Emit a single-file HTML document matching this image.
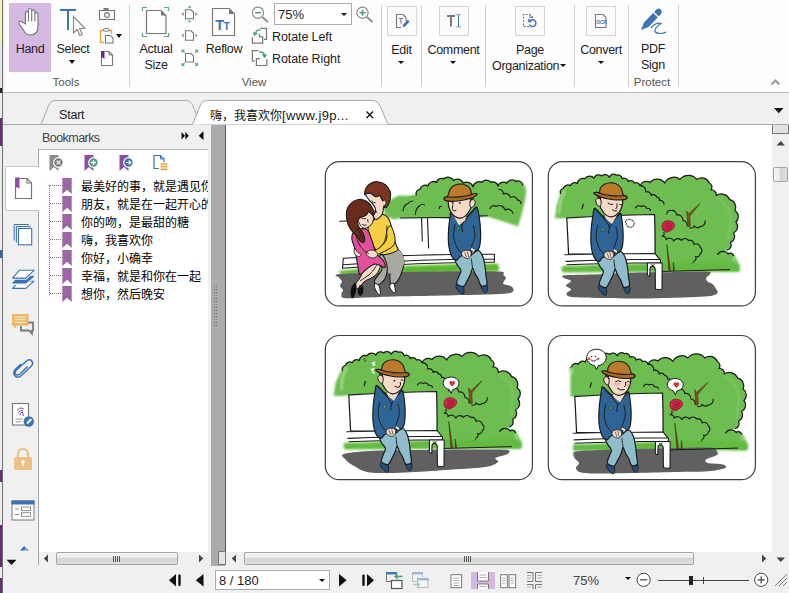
<!DOCTYPE html>
<html><head><meta charset="utf-8"><title>Foxit</title>
<style>
*{box-sizing:border-box;margin:0;padding:0}
html,body{width:789px;height:593px;overflow:hidden;background:#f0f0f0}
body{font-family:"Liberation Sans","Noto Sans CJK SC",sans-serif;font-size:12px;color:#222;position:relative}
.a{position:absolute}
.t{position:absolute;white-space:nowrap;line-height:14px;color:#1e1e1e}
.c{text-align:center}
.sep{position:absolute;width:1px;background:#d0d0d0;top:5px;height:82px}
.grp{position:absolute;top:75px;font-size:11.5px;color:#555;line-height:14px;text-align:center}
svg{position:absolute;overflow:visible}
.bm{position:absolute;left:81px;font-size:12px;line-height:16px;white-space:nowrap;color:#000;font-family:"Liberation Sans","Noto Sans CJK SC",sans-serif}
</style></head><body>

<!-- left window-edge strip -->
<div class="a" style="left:0;top:0;width:5px;height:593px;background:#f0f0f0"></div>
<div class="a" style="left:0;top:0;width:2px;height:593px;background:#ececf0"></div>
<div class="a" style="left:0;top:0;width:2px;height:44px;background:#f4efb4"></div>
<div class="a" style="left:0;top:44px;width:2px;height:44px;background:#dfe6ee"></div>
<div class="a" style="left:0;top:88px;width:2px;height:5px;background:#222"></div>
<div class="a" style="left:0;top:118px;width:2px;height:28px;background:#6b2a78"></div>
<div class="a" style="left:0;top:250px;width:2px;height:8px;background:#3565b5"></div>
<div class="a" style="left:0;top:470px;width:2px;height:12px;background:#6b2a78"></div>
<div class="a" style="left:0;top:525px;width:2px;height:42px;background:#6b2a78"></div><div class="a" style="left:0;top:578px;width:2px;height:15px;background:#6b2a78"></div>
<div class="a" style="left:2px;top:0;width:1px;height:593px;background:#6e6e6e"></div>
<!-- RIBBON -->
<div id="ribbon" class="a" style="left:5px;top:0;width:784px;height:92px;background:#fdfdfd"></div>
<div class="a" style="left:3px;top:92px;width:786px;height:1px;background:#b9b9b9"></div>


<!-- ribbon content -->
<div class="a" style="left:9px;top:3px;width:42px;height:69px;background:#d5b9e3"></div>
<svg style="left:17px;top:7px" width="26" height="30" viewBox="0 0 26 30">
<path d="M8.5 17 L8.5 6.2 Q8.5 4.4 10 4.4 Q11.5 4.4 11.5 6.2 L11.5 3.4 Q11.5 1.5 13.1 1.5 Q14.7 1.5 14.7 3.4 L14.7 4.6 Q14.7 2.9 16.3 2.9 Q17.9 2.9 17.9 4.8 L17.9 7 Q17.9 5.4 19.4 5.4 Q21 5.4 21 7.2 L21 19 Q21 28 13.5 28 Q9.5 28 7.3 24.5 L2.2 16.8 Q1.2 15.2 2.6 14.3 Q4 13.6 5.2 15 Z" fill="#fff" stroke="#7a7a7a" stroke-width="1.2" stroke-linejoin="round"/>
<path d="M11.5 6 V14.5 M14.7 4.6 V14.5 M17.9 7 V14.5" stroke="#7a7a7a" stroke-width="1.1" fill="none"/>
</svg>
<div class="t c" style="left:9px;top:42px;width:42px;font-size:12.5px;letter-spacing:-0.3px">Hand</div>

<svg style="left:58px;top:7px" width="30" height="30" viewBox="0 0 30 30">
<path d="M2 3 H18 M10 3 V23" stroke="#3b73b3" stroke-width="2" fill="none"/>
<path d="M15.5 9.5 L15.5 26 L19.3 22.6 L21.8 28.5 L24.2 27.4 L21.7 21.7 L26.8 21.3 Z" fill="#fff" stroke="#8a8a8a" stroke-width="1.2" stroke-linejoin="miter"/>
</svg>
<div class="t c" style="left:52px;top:42px;width:42px;font-size:12.5px;letter-spacing:-0.3px">Select</div>
<div class="a" style="left:69px;top:60px;border:3.5px solid transparent;border-top:4px solid #111;border-bottom:0"></div>

<!-- camera -->
<svg style="left:98px;top:7px" width="18" height="14" viewBox="0 0 18 14">
<rect x="1.5" y="3.5" width="15" height="9" fill="none" stroke="#777" stroke-width="1.1"/>
<rect x="5.5" y="1" width="5" height="2" fill="#777"/>
<circle cx="9" cy="8" r="2.4" fill="none" stroke="#777" stroke-width="1.1"/>
</svg>
<!-- clipboard -->
<svg style="left:99px;top:27px" width="18" height="18" viewBox="0 0 18 18">
<path d="M5 3.5 H1.5 V15.5 H5" fill="none" stroke="#e8a341" stroke-width="1.4"/>
<path d="M10 3.5 H12.5 V7" fill="none" stroke="#e8a341" stroke-width="1.4"/>
<rect x="4.5" y="1.5" width="5.5" height="2.6" rx="1.2" fill="#fdfdfd" stroke="#777" stroke-width="1"/>
<path d="M6.5 8.5 H11.5 L14 11 V16 H6.5 Z" fill="#fff" stroke="#777" stroke-width="1.1"/>
</svg>
<div class="a" style="left:116px;top:34px;border:3.5px solid transparent;border-top:4px solid #111;border-bottom:0"></div>
<!-- bookmark page -->
<svg style="left:100px;top:50px" width="16" height="18" viewBox="0 0 16 18">
<path d="M5 1.5 H9 L12.5 5 V15.5 H1.5 V9" fill="#fff" stroke="#777" stroke-width="1.1"/>
<path d="M9 1.5 V5 H12.5" fill="none" stroke="#777" stroke-width="1"/>
<path d="M1 1 H4.5 V9 L2.75 7.6 L1 9 Z" fill="#5e2d84"/>
</svg>
<div class="grp" style="left:40px;width:52px">Tools</div>
<div class="sep" style="left:129px"></div>

<!-- Actual size -->
<svg style="left:141px;top:6px" width="30" height="32" viewBox="0 0 30 32">
<path d="M1.5 5 V1.5 H6 M23 1.5 H27.5 V5 M27.5 27 V30.5 H23 M6 30.5 H1.5 V27" fill="none" stroke="#5aa58c" stroke-width="1.2"/>
<path d="M5.5 4.5 H20 L25 9.5 V27.5 H5.5 Z" fill="#fff" stroke="#777" stroke-width="1.2"/>
<path d="M20 4.5 L25 9.5 H20 Z" fill="#777"/>
</svg>
<div class="t c" style="left:132px;top:42px;width:48px;font-size:12.5px;letter-spacing:-0.3px">Actual</div>
<div class="t c" style="left:132px;top:58px;width:48px;font-size:12.5px;letter-spacing:-0.3px">Size</div>


<!-- fit icons -->
<svg style="left:180px;top:4px" width="20" height="20" viewBox="0 0 20 20">
<path d="M5.5 5.8 H11 L13.5 8.3 V14.8 H5.5 Z" fill="#fff" stroke="#777" stroke-width="1.1"/>
<path d="M9.5 1.6 L11.5 3.8 H7.5 Z M9.5 18.6 L11.5 16.4 H7.5 Z M1.6 10 L3.8 8 V12 Z M17.6 10 L15.4 8 V12 Z" fill="#5aa58c"/>
</svg>
<svg style="left:180px;top:26px" width="20" height="18" viewBox="0 0 20 18">
<path d="M5.5 4.8 H11 L13.5 7.3 V14.3 H5.5 Z" fill="#fff" stroke="#777" stroke-width="1.1"/>
<path d="M1.6 9.5 L3.8 7.5 V11.5 Z M17.6 9.5 L15.4 7.5 V11.5 Z" fill="#5aa58c"/>
</svg>
<svg style="left:180px;top:48px" width="20" height="20" viewBox="0 0 20 20">
<path d="M5.5 5.5 H11 L13.5 8 V14 H5.5 Z" fill="#fff" stroke="#777" stroke-width="1.1"/>
<path d="M2 2 L4.6 4.6 M2 2 H4.6 M2 2 V4.6 M17.5 2 L15 4.6 M17.5 2 H15 M17.5 2 V4.6 M2 17.5 L4.6 15 M2 17.5 H4.6 M2 17.5 V15 M17.5 17.5 L15 15 M17.5 17.5 H15 M17.5 17.5 V15" stroke="#5aa58c" stroke-width="1.1" fill="none"/>
</svg>
<!-- reflow -->
<svg style="left:211px;top:7px" width="26" height="30" viewBox="0 0 26 30">
<path d="M1.5 1.5 H18 L23.5 7 V28.5 H1.5 Z" fill="#fff" stroke="#777" stroke-width="1.2"/>
<path d="M18 1.5 L23.5 7 H18 Z" fill="#777"/>
<text x="4.2" y="23" font-family="Liberation Sans,sans-serif" font-weight="bold" font-size="14.5" fill="#3b73b3">T</text>
<text x="12.6" y="23" font-family="Liberation Sans,sans-serif" font-weight="bold" font-size="10.5" fill="#3b73b3">T</text>
</svg>
<div class="t c" style="left:200px;top:42px;width:48px;font-size:12.5px;letter-spacing:-0.3px">Reflow</div>
<!-- zoom out -->
<svg style="left:250px;top:5px" width="20" height="20" viewBox="0 0 20 20">
<circle cx="8" cy="7.7" r="5.6" fill="#fff" stroke="#8a8a8a" stroke-width="1.2"/>
<path d="M12.3 12 L18 17" stroke="#8a8a8a" stroke-width="1.8"/>
<path d="M5 7.7 H11" stroke="#4fa07f" stroke-width="1.6"/>
</svg>
<!-- zoom combobox -->
<div class="a" style="left:274px;top:3px;width:78px;height:22px;background:#fff;border:1px solid #ababab"></div>
<div class="t" style="left:278px;top:8px;font-size:13px">75%</div>
<div class="a" style="left:341px;top:13px;border:3px solid transparent;border-top:3.5px solid #111;border-bottom:0"></div>
<!-- zoom in -->
<svg style="left:355px;top:5px" width="20" height="20" viewBox="0 0 20 20">
<circle cx="7.5" cy="7.7" r="5.6" fill="#fff" stroke="#8a8a8a" stroke-width="1.2"/>
<path d="M11.8 12 L17.5 17" stroke="#8a8a8a" stroke-width="1.8"/>
<path d="M4.5 7.7 H10.5 M7.5 4.7 V10.7" stroke="#4fa07f" stroke-width="1.6"/>
</svg>
<!-- rotate left -->
<svg style="left:251px;top:27px" width="18" height="18" viewBox="0 0 18 18">
<path d="M9.200 1.300 H15.500 V12.300 H13" fill="none" stroke="#777" stroke-width="1.200"/>
<path d="M1.400 10.200 V16.100 H11.700 V9.800 H8.300 V6.800" fill="none" stroke="#777" stroke-width="1.200"/>
<path d="M9.600 3.600 Q6.200 1.300 4.600 6" fill="none" stroke="#4fa07f" stroke-width="1.400"/>
<path d="M1.800 5 L6.800 6.300 L3.300 9.200 Z" fill="#4fa07f"/>
</svg>
<div class="t" style="left:272px;top:30px;font-size:12.5px;letter-spacing:-0.1px">Rotate Left</div>
<!-- rotate right -->
<svg style="left:251px;top:49px" width="18" height="18" viewBox="0 0 18 18">
<path d="M7.500 1.700 H1.400 V12.200 H3.700" fill="none" stroke="#777" stroke-width="1.200"/>
<path d="M8.800 9.700 H5.400 V16.500 H15.800 V10.100" fill="none" stroke="#777" stroke-width="1.200"/>
<path d="M8.300 3.200 Q13 2.200 13.600 7" fill="none" stroke="#4fa07f" stroke-width="1.400"/>
<path d="M10.700 5.200 L16.200 5.500 L13.700 9.300 Z" fill="#4fa07f"/>
</svg>
<div class="t" style="left:272px;top:52px;font-size:12.5px;letter-spacing:-0.1px">Rotate Right</div>
<div class="grp" style="left:228px;width:52px">View</div>
<div class="sep" style="left:381px"></div>


<!-- Edit -->
<div class="a" style="left:387px;top:6px;width:30px;height:30px;background:#fbfbfb;border:1px solid #d6d6d6"></div>
<svg style="left:393px;top:12px" width="18" height="18" viewBox="0 0 18 18">
<path d="M3.5 2.5 H10 L13 5.5 V9 M8 15.5 H3.5 V2.5" fill="none" stroke="#777" stroke-width="1.1"/>
<path d="M5.8 6.5 H10.2 M8 6.5 V11.5" stroke="#777" stroke-width="1.1"/>
<path d="M9.5 15.2 L10.4 12.2 L14.6 7.8 L16.6 9.6 L12.4 14.2 Z" fill="#3b73b3"/>
</svg>
<div class="t c" style="left:381px;top:43px;width:41px;font-size:12.5px;letter-spacing:-0.3px">Edit</div>
<div class="a" style="left:398px;top:61px;border:3px solid transparent;border-top:3.5px solid #111;border-bottom:0"></div>
<div class="sep" style="left:421px"></div>
<!-- Comment -->
<div class="a" style="left:439px;top:6px;width:30px;height:30px;background:#fbfbfb;border:1px solid #d6d6d6"></div>
<svg style="left:445px;top:12px" width="18" height="18" viewBox="0 0 18 18">
<path d="M2 4 H10 M6 4 V14.5" stroke="#777" stroke-width="1.9" fill="none"/>
<path d="M11.5 2.5 Q13 2.5 13.5 3.3 Q14 2.5 15.5 2.5 M13.5 3.3 V14.2 M11.5 15 Q13 15 13.5 14.2 Q14 15 15.5 15" stroke="#3b73b3" stroke-width="1" fill="none"/>
</svg>
<div class="t c" style="left:423px;top:43px;width:61px;font-size:12.5px;letter-spacing:-0.3px">Comment</div>
<div class="a" style="left:450px;top:61px;border:3px solid transparent;border-top:3.5px solid #111;border-bottom:0"></div>
<div class="sep" style="left:485px"></div>
<!-- Page Org -->
<div class="a" style="left:515px;top:6px;width:30px;height:30px;background:#fbfbfb;border:1px solid #d6d6d6"></div>
<svg style="left:521px;top:12px" width="18" height="18" viewBox="0 0 18 18">
<path d="M8 14.5 H2.5 V2.5 H9 L12 5.5" fill="none" stroke="#777" stroke-width="1.1" stroke-dasharray="2 1.3"/>
<path d="M9 2.5 V5.5 H12" fill="none" stroke="#777" stroke-width="1"/>
<path d="M9.2 8.6 A3.4 3.4 0 1 1 8.4 12.6" fill="none" stroke="#3b73b3" stroke-width="1.5"/>
<path d="M7.2 6.3 V10.2 H11 Z" fill="#3b73b3"/>
</svg>
<div class="t c" style="left:487px;top:43px;width:86px;font-size:12.5px;letter-spacing:-0.3px">Page</div>
<div class="t" style="left:492px;top:59px;font-size:12.5px;letter-spacing:-0.3px">Organization</div>
<div class="a" style="left:560px;top:64px;border:3px solid transparent;border-top:3.5px solid #111;border-bottom:0"></div>
<div class="sep" style="left:574px"></div>
<!-- Convert -->
<div class="a" style="left:586px;top:6px;width:30px;height:30px;background:#fbfbfb;border:1px solid #d6d6d6"></div>
<svg style="left:592px;top:12px" width="18" height="18" viewBox="0 0 18 18">
<path d="M3.5 2.5 H11 L14 5.5 V15.5 H3.5 Z" fill="#fff" stroke="#777" stroke-width="1.1"/>
<text x="4.3" y="11.5" font-family="Liberation Sans,sans-serif" font-weight="bold" font-size="5" fill="#3b73b3" letter-spacing="-0.3">OCR</text>
</svg>
<div class="t c" style="left:575px;top:43px;width:52px;font-size:12.5px;letter-spacing:-0.3px">Convert</div>
<div class="a" style="left:598px;top:61px;border:3px solid transparent;border-top:3.5px solid #111;border-bottom:0"></div>
<div class="sep" style="left:628px"></div>
<!-- PDF Sign -->
<svg style="left:638px;top:6px" width="30" height="30" viewBox="0 0 30 30">
<path d="M3 24 L6 16.5 L18.5 3.5 Q20.8 1.6 23 3.8 Q24.8 6 23 8 L10.5 21 Z" fill="#3b73b3"/>
<path d="M15.5 6.3 L20.3 11" stroke="#fdfdfd" stroke-width="1.3"/>
<path d="M13 22 Q18 16 23 17.5 Q20 19 17.5 22.5 Q15 27 22 27.5 Q26 27.5 28 26" fill="none" stroke="#3b73b3" stroke-width="1.2"/>
</svg>
<div class="t c" style="left:629px;top:42px;width:48px;font-size:12.5px;letter-spacing:-0.3px">PDF</div>
<div class="t c" style="left:629px;top:58px;width:48px;font-size:12.5px;letter-spacing:-0.3px">Sign</div>
<div class="grp" style="left:626px;width:52px">Protect</div>
<div class="sep" style="left:678px"></div>
<svg style="left:770px;top:78px" width="12" height="8" viewBox="0 0 12 8"><path d="M1.500 6.500 L5.500 2.500 L9.500 6.500" fill="none" stroke="#9a9a9a" stroke-width="2"/></svg>

<!-- tabbar -->
<div class="a" style="left:3px;top:93px;width:786px;height:32px;background:#f0f0f0"></div>
<div class="a" style="left:3px;top:124px;width:786px;height:1px;background:#a8a8a8"></div>


<!-- tabs -->
<svg style="left:0;top:93px" width="789" height="33" viewBox="0 0 789 33">
<path d="M41 31.5 L48.5 13 Q50.5 8 55 7.5 H186 Q191 8 193 13 L200 31.5" fill="#f0f0f0" stroke="#a9a9a9" stroke-width="1"/>
<path d="M192.5 31.5 L200 13 Q202 8 206.5 7.5 H373 Q378 8 380 13 L388 31.5 Z" fill="#fff" stroke="none"/>
<path d="M5 31.5 H192.5 L200 13 Q202 8 206.5 7.5 H373 Q378 8 380 13 L388 31.5 H789" fill="none" stroke="#a9a9a9" stroke-width="1"/>
<path d="M774 15 H783.500 L778.750 20.300 Z" fill="#111"/>
<path d="M366.500 18.500 L373 25 M373 18.500 L366.500 25" stroke="#111" stroke-width="1.4"/>
</svg>
<div class="t" style="left:59px;top:108px;font-size:12.5px;letter-spacing:-0.2px">Start</div>
<div class="t" style="left:210px;top:108px;font-size:12px;line-height:16px;color:#111">嗨，我喜欢你<span style="color:#1a1a1a;font-size:13px;letter-spacing:0.35px">[www.j9p...</span></div>

<!-- nav panel -->
<div id="nav" class="a" style="left:3px;top:125px;width:208px;height:442px;background:#f0f0f0"></div>
<div class="a" style="left:38px;top:149px;width:170px;height:403px;background:#fff;border-top:1px solid #b4b4b4;border-left:1px solid #a6a6a6"></div>

<!-- nav content -->
<div class="t" style="left:42px;top:131px;font-size:12.5px;letter-spacing:-0.55px;color:#444">Bookmarks</div>
<svg style="left:181px;top:131px" width="24" height="10" viewBox="0 0 24 10">
<path d="M0.500 1 L4 4.800 L0.500 8.600 Z M4.300 1 L7.800 4.800 L4.300 8.600 Z" fill="#111"/>
<path d="M22.500 0.300 V9.300 L17.700 4.800 Z" fill="#111"/>
</svg>
<!-- selected side tab -->
<div class="a" style="left:5px;top:166px;width:34px;height:45px;background:#fff;border:1px solid #c8c8c8;border-right:0"></div>
<div class="a" style="left:38px;top:211px;width:1px;height:354px;background:#a6a6a6"></div>
<!-- side icons -->
<svg style="left:13px;top:176px" width="22" height="24" viewBox="0 0 22 24">
<path d="M6 2.500 H14 L18.500 7 V22.500 H2.500 V12" fill="#fff" stroke="#777" stroke-width="1.200"/>
<path d="M14 2.500 V7 H18.500" fill="none" stroke="#777" stroke-width="1.100"/>
<path d="M2 1.500 H6.500 V13 L4.250 11 L2 13 Z" fill="#8a4ea2"/>
</svg>
<svg style="left:13px;top:223px" width="22" height="24" viewBox="0 0 22 24">
<path d="M1.200 17.500 V1.500 H16.200 M3.400 19.500 V3.500 H17.500" fill="none" stroke="#3b73b3" stroke-width="1"/>
<rect x="5.500" y="5.500" width="13.200" height="16.300" fill="#fff" stroke="#3b73b3" stroke-width="1.100"/>
</svg>
<svg style="left:11px;top:268px" width="25" height="22" viewBox="0 0 25 22">
<path d="M8.300 13.200 H23 L14.800 20.400 H1.600 Z" fill="#fff" stroke="#3b73b3" stroke-width="1.100" stroke-linejoin="round"/>
<path d="M8.300 8 H23 L14.800 15.300 H1.600 Z" fill="#f0f0f0" stroke="#f0f0f0" stroke-width="3.200" stroke-linejoin="round"/><path d="M8.300 8.300 H23 L15 15 H1.600 Z" fill="#3b73b3" stroke="#3b73b3" stroke-width="1" stroke-linejoin="round"/>
<path d="M8.300 2.300 H23 L14.800 10.100 H1.600 Z" fill="#f0f0f0" stroke="#f0f0f0" stroke-width="3.200" stroke-linejoin="round"/><path d="M8.300 2.300 H23 L14.800 10.100 H1.600 Z" fill="#fff" stroke="#3b73b3" stroke-width="1.100" stroke-linejoin="round"/>
</svg>
<!-- bookmark toolbar -->
<svg style="left:48px;top:154px" width="18" height="18" viewBox="0 0 18 18">
<path d="M1.500 1 H10.500 V17 L6 13 L1.500 17 Z" fill="#8c8c8c"/>
<circle cx="10.500" cy="8.500" r="4.800" fill="#7d7d7d" stroke="#fff" stroke-width="1.200"/>
<path d="M8.700 6.700 L12.300 10.300 M12.300 6.700 L8.700 10.300" stroke="#fff" stroke-width="1.200"/>
</svg>
<svg style="left:83px;top:154px" width="18" height="18" viewBox="0 0 18 18">
<path d="M1.500 1 H10.500 V17 L6 13 L1.500 17 Z" fill="#8a4ea2"/>
<circle cx="10.500" cy="8.500" r="4.800" fill="#4fa07f" stroke="#fff" stroke-width="1.200"/>
<path d="M8 8.500 H13 M10.500 6 V11" stroke="#fff" stroke-width="1.300"/>
</svg>
<svg style="left:118px;top:154px" width="18" height="18" viewBox="0 0 18 18">
<path d="M1.500 1 H10.500 V17 L6 13 L1.500 17 Z" fill="#8a4ea2"/>
<circle cx="10.500" cy="8.500" r="4.800" fill="#3b73b3" stroke="#fff" stroke-width="1.200"/>
<path d="M8 8.500 H12.600 M10.800 6.500 L12.800 8.500 L10.800 10.500" stroke="#fff" stroke-width="1.200" fill="none"/>
</svg>
<svg style="left:152px;top:154px" width="18" height="18" viewBox="0 0 18 18">
<path d="M7 14.500 H2 V1.500 H8.500 L12 5 V8" fill="#fff" stroke="#3b73b3" stroke-width="1.200"/>
<path d="M8.500 1.500 V5 H12" fill="none" stroke="#3b73b3" stroke-width="1"/>
<path d="M8.500 10 H15.500 M8.500 12.700 H15.500 M8.500 15.400 H15.500" stroke="#e8a341" stroke-width="1.700"/>
</svg>
<!-- tree -->
<div class="a" style="left:49px;top:185px;width:0;height:110px;border-left:1px dotted #777"></div>
<div class="a" style="left:39px;top:176px;width:169px;height:130px;overflow:hidden"><div style="position:absolute;left:-39px;top:-176px;width:400px;height:400px">
<svg style="left:62px;top:178px" width="10" height="16" viewBox="0 0 10 16"><path d="M0.300 0 H9.700 V16 L5 11.800 L0.300 16 Z" fill="#9a66a4"/></svg>
<div class="bm" style="top:178.5px">最美好的事，就是遇见你</div>
<div class="a" style="left:50px;top:185px;width:11px;height:0;border-top:1px dotted #777"></div>
<svg style="left:62px;top:196px" width="10" height="16" viewBox="0 0 10 16"><path d="M0.300 0 H9.700 V16 L5 11.800 L0.300 16 Z" fill="#9a66a4"/></svg>
<div class="bm" style="top:196.5px">朋友，就是在一起开心的</div>
<div class="a" style="left:50px;top:203px;width:11px;height:0;border-top:1px dotted #777"></div>
<svg style="left:62px;top:214px" width="10" height="16" viewBox="0 0 10 16"><path d="M0.300 0 H9.700 V16 L5 11.800 L0.300 16 Z" fill="#9a66a4"/></svg>
<div class="bm" style="top:214.5px">你的吻，是最甜的糖</div>
<div class="a" style="left:50px;top:221px;width:11px;height:0;border-top:1px dotted #777"></div>
<svg style="left:62px;top:232px" width="10" height="16" viewBox="0 0 10 16"><path d="M0.300 0 H9.700 V16 L5 11.800 L0.300 16 Z" fill="#9a66a4"/></svg>
<div class="bm" style="top:232.5px">嗨，我喜欢你</div>
<div class="a" style="left:50px;top:239px;width:11px;height:0;border-top:1px dotted #777"></div>
<svg style="left:62px;top:250px" width="10" height="16" viewBox="0 0 10 16"><path d="M0.300 0 H9.700 V16 L5 11.800 L0.300 16 Z" fill="#9a66a4"/></svg>
<div class="bm" style="top:250.5px">你好，小确幸</div>
<div class="a" style="left:50px;top:257px;width:11px;height:0;border-top:1px dotted #777"></div>
<svg style="left:62px;top:268px" width="10" height="16" viewBox="0 0 10 16"><path d="M0.300 0 H9.700 V16 L5 11.800 L0.300 16 Z" fill="#9a66a4"/></svg>
<div class="bm" style="top:268.5px">幸福，就是和你在一起</div>
<div class="a" style="left:50px;top:275px;width:11px;height:0;border-top:1px dotted #777"></div>
<svg style="left:62px;top:286px" width="10" height="16" viewBox="0 0 10 16"><path d="M0.300 0 H9.700 V16 L5 11.800 L0.300 16 Z" fill="#9a66a4"/></svg>
<div class="bm" style="top:286.5px">想你，然后晚安</div>
<div class="a" style="left:50px;top:293px;width:11px;height:0;border-top:1px dotted #777"></div>
</div></div>


<!-- lower side icons -->
<svg style="left:11px;top:313px" width="24" height="22" viewBox="0 0 24 22">
<path d="M10 13 V17.500 H18 L21 20.500 V17.500 H22 V9.500 H17" fill="none" stroke="#7a7a7a" stroke-width="1.800"/>
<path d="M1 1 H17.500 V12.500 H6 L2.800 16 V12.500 H1 Z" fill="#f0b463"/>
<path d="M3.500 4 H15 M3.500 6.700 H15 M3.500 9.400 H15" stroke="#fff" stroke-width="0.900"/>
</svg>
<svg style="left:12px;top:357px" width="24" height="24" viewBox="0 0 24 24">
<path d="M15.500 9.500 L8 17 Q5.500 19 3.800 17.200 Q2.300 15.300 4.200 13.300 L14.500 4 Q17.500 1.600 19.800 3.900 Q21.800 6.300 19.300 9 L9.500 18.500 Q5.500 22 2.700 18.500 Q0.600 15.300 3.500 12.300 L9 7" fill="none" stroke="#3b73b3" stroke-width="1.500"/>
</svg>
<svg style="left:11px;top:402px" width="24" height="26" viewBox="0 0 24 26">
<rect x="1.500" y="1.500" width="16" height="21.500" fill="#fff" stroke="#777" stroke-width="1.100"/>
<path d="M4.500 17 H12 M4.500 19.800 H10" stroke="#888" stroke-width="0.900"/>
<path d="M6 8.500 Q8.500 4.500 12.500 6.500 M7 11 Q9 7 12 9 M9 13.500 Q8.500 10.500 11 10.300 Q12.500 10.500 12 12 Q11 13.500 13 13.500" fill="none" stroke="#8a4ea2" stroke-width="1"/>
<circle cx="17.800" cy="19.500" r="5.200" fill="#3b73b3"/>
<path d="M15.500 22 L16 20 L19.500 16.500 L21 18 L17.500 21.500 Z" fill="#fff"/>
</svg>
<svg style="left:13px;top:447px" width="20" height="24" viewBox="0 0 20 24">
<path d="M5 11 V7 Q5 2 10 2 Q15 2 15 7 V11" fill="none" stroke="#ecc183" stroke-width="2.200"/>
<rect x="1" y="10" width="18" height="13" rx="1.500" fill="#ecc183"/>
<circle cx="10" cy="15" r="1.700" fill="#fff"/><rect x="9.200" y="15" width="1.600" height="4" fill="#fff"/>
</svg>
<svg style="left:11px;top:500px" width="24" height="21" viewBox="0 0 24 21">
<rect x="1" y="1" width="22" height="19" fill="#fff" stroke="#777" stroke-width="1"/>
<rect x="0.500" y="0.500" width="23" height="4" fill="#3b73b3"/>
<path d="M4 9 H8 M4 14.500 H8" stroke="#888" stroke-width="1"/>
<rect x="10.500" y="7" width="9" height="3.600" fill="#fff" stroke="#888" stroke-width="0.900"/>
<rect x="10.500" y="12.700" width="9" height="3.600" fill="#fff" stroke="#888" stroke-width="0.900"/>
</svg>
<svg style="left:19px;top:545px" width="12" height="6" viewBox="0 0 12 6"><path d="M1 5.500 L5 1 L7.500 3.200 L5.500 5.500 Z M8 3.700 L10 5.500 H6.500 Z" fill="#3b73b3"/></svg>
<svg style="left:6px;top:559px" width="12" height="7" viewBox="0 0 12 7"><path d="M0.500 0.800 H10.500 L5.500 6 Z" fill="#111"/></svg>

<!-- nav h scrollbar -->
<div class="a" style="left:39px;top:552px;width:169px;height:14px;background:#f0f0f0"></div>
<div class="a" style="left:56px;top:552px;width:122px;height:13px;border:1px solid #a5a5a5;border-radius:2px;background:linear-gradient(#f6f6f6,#e9e9e9 45%,#d4d4d4 50%,#dfdfdf)"></div>
<div class="a" style="left:113px;top:556px;width:1px;height:6px;background:#555;box-shadow:2px 0 0 #555,4px 0 0 #555,6px 0 0 #555"></div>
<svg style="left:43px;top:554px" width="6" height="9" viewBox="0 0 6 9"><path d="M5 0.500 V8.500 L0.800 4.500 Z" fill="#444"/></svg>
<svg style="left:198px;top:554px" width="6" height="9" viewBox="0 0 6 9"><path d="M1 0.500 V8.500 L5.200 4.500 Z" fill="#444"/></svg>

<!-- splitter -->
<div class="a" style="left:211px;top:125px;width:14px;height:441px;background:#ababab"></div>
<div class="a" style="left:225px;top:125px;width:1px;height:426px;background:#555"></div>
<div class="a" style="left:214px;top:286px;width:1px;height:42px;background:repeating-linear-gradient(to bottom,#6a6a6a 0 1px,transparent 1px 3px)"></div><div class="a" style="left:216px;top:286px;width:1px;height:42px;background:repeating-linear-gradient(to bottom,#6a6a6a 0 1px,transparent 1px 3px)"></div>
<!-- doc area -->
<div id="doc" class="a" style="left:226px;top:125px;width:546px;height:427px;background:#fff"></div>
<!--COMIC--><svg style="left:226px;top:126px" width="545" height="424" viewBox="226 126 545 424"><defs><filter id="fz" x="-10%" y="-10%" width="120%" height="120%"><feGaussianBlur stdDeviation="1.300"/></filter><filter id="fz1" x="-5%" y="-30%" width="110%" height="160%"><feGaussianBlur stdDeviation="0.800"/></filter></defs><clipPath id="c1"><rect x="325.8" y="162.2" width="206.100" height="143.200" rx="13.500" ry="13.500"/></clipPath><g clip-path="url(#c1)"><path d="M383.5,210 L388,201 L398.5,195.5 L410,196 L416.3,194.8 L420,188 L428,184.5 L437,181 L444,177.5 L453.6,179 L463.3,182 L473,185.5 L482,181 L491,181 L498,184.5 L507,182 L515.7,180 L523,183.5 L526.5,189.5 L524.5,203 L521.5,215 L518,226.5 L505,222 L487.3,216.5 L449,217.5 L400,218 L394,219.5 L386,216 Z" fill="#6dbd50" filter="url(#fz)"/><path d="M416.3 194.8 A3.9 3.9 0 0 1 419.8 189.5 A5.4 5.4 0 0 1 427.8 186 A6 6 0 0 1 436.7 182.4 A4.9 4.9 0 0 1 443.8 178.9 A6.2 6.2 0 0 1 453.6 180.6 A6.2 6.2 0 0 1 463.3 183.3 A6.5 6.5 0 0 1 473.1 186.9 A6.1 6.1 0 0 1 481.9 182.4 A5.5 5.5 0 0 1 490.8 182.4 A4.9 4.9 0 0 1 497.9 186 A5.8 5.8 0 0 1 506.8 183.3 A5.6 5.6 0 0 1 515.7 181.5 A4.9 4.9 0 0 1 522.8 185.1 L523.500 200 L520 213 L516.500 223.500 L487.300 215.500 L449 216.800 L400 217 L392 214 L390 205 L400 198.500 Z" fill="#6dbd50"/><path d="M416.3 194.8 A3.9 3.9 0 0 1 419.8 189.5 A5.4 5.4 0 0 1 427.8 186 A6 6 0 0 1 436.7 182.4 A4.9 4.9 0 0 1 443.8 178.9 A6.2 6.2 0 0 1 453.6 180.6 A6.2 6.2 0 0 1 463.3 183.3 A6.5 6.5 0 0 1 473.1 186.9 A6.1 6.1 0 0 1 481.9 182.4 A5.5 5.5 0 0 1 490.8 182.4 A4.9 4.9 0 0 1 497.9 186 A5.8 5.8 0 0 1 506.8 183.3 A5.6 5.6 0 0 1 515.7 181.5 A4.9 4.9 0 0 1 522.8 185.1" fill="none" stroke="#1a1a1a" stroke-width="1.25" stroke-linejoin="round" stroke-linecap="round" /><path d="M498.8 189.5 A3.9 3.9 0 0 1 503.2 194 A4.9 4.9 0 0 1 510.3 197.5 A4.7 4.7 0 0 1 517.4 200.2 A3.1 3.1 0 0 1 521 203.7" fill="none" stroke="#1a1a1a" stroke-width="1.1" stroke-linejoin="round" stroke-linecap="round" /><path d="M489.9 208.5 A4.1 4.1 0 0 1 496.1 206.4 A5.9 5.9 0 0 1 505 209.9 A5.4 5.4 0 0 1 513 213.5" fill="none" stroke="#1a1a1a" stroke-width="1.1" stroke-linejoin="round" stroke-linecap="round" /><path d="M403 210.800 Q403.500 205 408 203.500 Q409.500 201 412.700 201 M415.400 214.400 Q415.800 208 419.500 206 Q421.500 203.300 424.300 204.800 M439.300 208.500 Q439.300 206 441.500 206.500" fill="none" stroke="#1a1a1a" stroke-width="1.1" stroke-linejoin="round" stroke-linecap="round" /><path d="M339.700 221.300 L347 221 M400.300 218 Q425 217.300 449.500 217.600 M474.800 216.100 L487.300 215.800 M421.600 217.800 L422.300 241 M427.500 217.800 L428.600 248" fill="none" stroke="#1a1a1a" stroke-width="1.100" stroke-linejoin="round" stroke-linecap="round" /><path d="M343.300 258.300 Q420 254 494.400 254.200 L494.400 262.200 Q420 262 342.500 268.300 Z" fill="#fff" stroke="#1a1a1a" stroke-width="1.100" stroke-linejoin="round" stroke-linecap="round" /><path d="M343 264.800 Q420 258.600 494.400 259.200" fill="none" stroke="#1a1a1a" stroke-width="1" stroke-linejoin="round" stroke-linecap="round" /><path d="M339.500 270.700 Q420 263.500 498 263.800 Q500 267.500 498.800 271.300 L340 274.300 Z" fill="#5cb82f" filter="url(#fz1)"/><path d="M340.3 274 C350.4 273 380.1 272.4 400 272 C419.9 271.6 443.4 271.4 460 271.3 C476.6 271.2 492.4 270.9 499.7 271.5 C506.9 272.1 502.5 273.9 503.5 275 C504.5 276.1 505.9 276.6 505.9 278 C505.8 279.4 502.7 282.2 503.2 283.5 C503.7 284.8 507.4 284.8 509 285.5 C510.6 286.2 512.5 286.9 513 288 C513.5 289.1 514.2 291.3 512 292.3 C509.8 293.3 507.7 293.6 500 294 C492.3 294.4 479.3 294.7 466 295 C452.7 295.3 431.8 295.8 420 296 C408.2 296.2 404.2 296.1 395 296.4 C385.8 296.6 373.5 297.2 365 297.5 C356.5 297.8 347.9 298.6 344 298 C340.1 297.4 341.7 295.3 341.5 294 C341.3 292.7 343.2 291.3 343 290 C342.8 288.7 340.2 287.4 340 286 C339.8 284.6 342.1 282.8 342 281.5 C341.9 280.2 339.8 279.2 339.5 278 C339.2 276.8 330.2 275 340.3 274 Z" fill="#606060"/><path d="M397.5 249.5 C400.3 250.2 402.8 256.1 403.7 259.5 C404.5 262.9 403.7 266.3 402.5 270.1 C401.3 273.9 398.6 280 396.6 282.2 C394.6 284.4 391.5 285.1 390.5 283.3 C389.4 281.5 389.9 275 390.2 271.3 C390.6 267.6 393.1 263.6 392.6 260.9 C392 258.3 386.1 257.3 386.9 255.4 C387.7 253.5 394.7 248.8 397.5 249.5 Z" fill="#a9a9a2" stroke="#1a1a1a" stroke-width="1.1" stroke-linejoin="round" stroke-linecap="round" /><path d="M378.7 255.3 C379.5 253.8 383.2 254.3 386.3 253.2 C389.5 252.2 394.6 248.2 397.5 249.1 C400.4 249.9 402.8 255.3 403.8 258.1 C404.7 260.9 404.5 263.8 403.1 265.8 C401.7 267.8 397.3 268.8 395.4 270 C393.5 271.1 392.8 272.2 391.6 272.8 C390.5 273.3 389.3 273.6 388.4 273.2 C387.5 272.7 387.5 271.8 386.3 270 C385.2 268.2 382.7 264.7 381.5 262.3 C380.2 259.9 377.9 256.8 378.7 255.3 Z" fill="#a9a9a2"/><path d="M382.2 254.2 C383.6 255.2 386.3 261.6 386.9 265.4 C387.5 269.2 387.1 274 385.7 277.2 C384.4 280.4 380.8 283.9 378.9 284.5 C377 285.1 373.8 283.5 374.3 281 C374.8 278.4 381.2 272.8 382 269.2 C382.7 265.6 378.6 262 378.7 259.5 C378.7 257 380.8 253.2 382.2 254.2 Z" fill="#a9a9a2" stroke="#1a1a1a" stroke-width="1.1" stroke-linejoin="round" stroke-linecap="round" /><path d="M374.5 283.7 C373.9 284.3 374.4 287.2 375.1 289 C375.8 290.8 378 294.1 378.9 294.7 C379.8 295.3 380.3 294.1 380.3 292.5 C380.3 291 379.9 286.9 378.9 285.5 C377.9 284 375.2 283.1 374.5 283.7 Z" fill="#fff" stroke="#1a1a1a" stroke-width="1" stroke-linejoin="round" stroke-linecap="round" /><path d="M389.9 284.5 C389.3 285.4 389.8 287.6 390.5 289 C391.1 290.4 393.2 292.5 394 292.8 C394.8 293.1 395.5 292.3 395.4 290.8 C395.4 289.3 394.7 284.7 393.8 283.7 C392.8 282.6 390.4 283.6 389.9 284.5 Z" fill="#fff" stroke="#1a1a1a" stroke-width="1" stroke-linejoin="round" stroke-linecap="round" /><path d="M373.9 220.1 C375.3 218.9 376.6 218 378 217 C379.4 216 380.5 214.1 382.2 214.2 C383.9 214.3 386.5 215.6 388.1 217.8 C389.7 220 390.6 223.7 391.6 227.2 C392.6 230.7 393.2 235.9 394 239 C394.8 242.1 396 244.2 396.6 246 C397.2 247.8 398.9 248.8 397.8 250 C396.7 251.2 392.6 252.7 390 253.5 C387.4 254.3 384.5 255.2 382.2 254.6 C379.9 254 377.8 251.9 376 250 C374.2 248.1 372.6 245.3 371.6 243 C370.6 240.7 370.6 238.2 370 236 C369.4 233.8 368.1 231.6 368 229.6 C367.9 227.6 368.5 225.6 369.5 224 C370.5 222.4 372.5 221.3 373.9 220.1 Z" fill="#f6d044" stroke="#1a1a1a" stroke-width="1.1" stroke-linejoin="round" stroke-linecap="round" /><path d="M387 226 C386.8 227.7 386.7 233 386 236 C385.3 239 384.5 241.6 383 244 C381.5 246.4 378 249.4 377 250.5" fill="none" stroke="#1a1a1a" stroke-width="0.9" stroke-linejoin="round" stroke-linecap="round" /><path d="M365.4 193.9 C365.6 192.8 368.7 192.8 370.4 193.2 C372.1 193.6 374.2 196.1 375.7 196.5 C377.2 196.9 378.5 194.9 379.6 195.6 C380.7 196.2 381.6 199.4 382.4 200.3 C383.3 201.1 384 200.1 384.6 200.6 C385.1 201.2 385.7 202.6 385.5 203.6 C385.3 204.6 384.2 205.1 383.6 206.9 C383.1 208.7 383.4 212.1 382.2 214.2 C381 216.3 377.8 219.3 376.3 219.5 C374.8 219.7 373.4 216.8 373.3 215.4 C373.2 214 375.6 212.6 375.7 210.9 C375.8 209.2 375 207.2 373.9 205.4 C372.9 203.6 370.6 202 369.2 200.1 C367.8 198.2 365.2 195.1 365.4 193.9 Z" fill="#f6dac8" stroke="#1a1a1a" stroke-width="1.1" stroke-linejoin="round" stroke-linecap="round" /><path d="M371.600 201.200 Q373.300 203.300 375.300 202.700 M374.300 210.800 Q375.500 212.600 377 212.300" fill="none" stroke="#1a1a1a" stroke-width="0.9" stroke-linejoin="round" stroke-linecap="round" /><path d="M364.5 194.4 C364.5 193.5 364.9 190.1 365.9 188.3 C366.9 186.5 368.5 184.6 370.4 183.5 C372.3 182.4 374.9 181.4 377.5 181.7 C380 181.9 383.6 183.3 385.7 185 C387.9 186.6 389.5 189.5 390.2 191.8 C391 194.1 390.6 196.7 390.2 198.9 C389.9 201.1 389 203.5 388.1 205 C387.2 206.5 385.5 208.1 384.8 207.8 C384.1 207.6 384.4 204.9 384.1 203.6 C383.7 202.3 383.4 201.6 382.7 200.3 C382 199 381 196.2 379.8 195.6 C378.7 195 377.3 197.2 375.7 196.8 C374.1 196.3 372 193.5 370.4 193 C368.8 192.5 366.9 193.5 365.9 193.7 C364.9 193.9 364.5 195.3 364.5 194.4 Z" fill="#7a341f" stroke="#1a1a1a" stroke-width="1.1" stroke-linejoin="round" stroke-linecap="round" /><path d="M382.8 201 C383.2 200.9 384.6 199.9 385.1 200.3 C385.7 200.7 386.2 202.4 386 203.4 C385.8 204.3 384.2 205.7 383.8 206.2" fill="#f6dac8" stroke="#1a1a1a" stroke-width="0.9" stroke-linejoin="round" stroke-linecap="round" /><path d="M364.5 269.5 C367.2 267.2 373.6 264.1 376.3 263.4 C379 262.7 380.5 263.5 380.4 265.4 C380.3 267.3 378.5 272.3 375.7 275.1 C373 277.8 366.7 279.6 363.9 281.9 C361.2 284.2 360.7 288.4 359.2 289 C357.7 289.6 354.9 287.4 355.1 285.5 C355.3 283.5 358.8 279.9 360.4 277.2 C361.9 274.5 361.8 271.8 364.5 269.5 Z" fill="#f6dac8" stroke="#1a1a1a" stroke-width="1" stroke-linejoin="round" stroke-linecap="round" /><path d="M376.5 265.4 C375.5 266.8 373.1 271.1 370.4 273.7 C367.7 276.2 362 279.6 360.4 280.7" fill="none" stroke="#1a1a1a" stroke-width="0.9" stroke-linejoin="round" stroke-linecap="round" /><path d="M354.5 282.9 C353.5 283.5 351.5 286.8 350.9 289 C350.3 291.2 350.6 294.5 350.9 296.1 C351.3 297.6 352.2 298.6 352.9 298.2 C353.7 297.8 354.7 295.8 355.3 293.7 C355.9 291.6 356.6 287.3 356.5 285.5 C356.3 283.6 355.4 282.3 354.5 282.9 Z" fill="#111"/><path d="M359.2 286 C358.5 287.1 357.6 289.7 357.7 291.4 C357.8 293 358.9 295.4 359.8 295.8 C360.6 296.2 362.1 295.1 362.7 293.7 C363.3 292.4 363.5 289.2 363.3 287.8 C363.1 286.4 362.2 285.5 361.5 285.2 C360.9 284.9 359.8 285 359.2 286 Z" fill="#111"/><path d="M352.7 233.5 C353.7 231.8 355.6 230.2 358 229.5 C360.4 228.8 364.7 228.2 366.9 229.6 C369.1 231 369.8 235.1 371 238 C372.2 240.9 373.1 244.4 374 247 C374.9 249.6 374.7 251.3 376.3 253.6 C377.9 255.9 381.9 258.4 383.4 260.7 C384.8 263 385.6 266.7 385 267.5 C384.4 268.3 381.7 265.9 379.8 265.4 C377.9 264.8 376.2 263.5 373.9 264.2 C371.6 264.9 368.4 267.8 366 269.5 C363.6 271.2 361.2 275.6 359.8 274.5 C358.4 273.4 358.3 267.5 357.4 263 C356.5 258.5 355.4 251.5 354.5 247.7 C353.6 243.9 352.3 242.4 352 240 C351.7 237.6 351.7 235.2 352.7 233.5 Z" fill="#e2509c" stroke="#1a1a1a" stroke-width="1.1" stroke-linejoin="round" stroke-linecap="round" /><path d="M391 226 C392.3 227.3 394.7 234.7 395 238 C395.3 241.3 395.2 243.6 393 246 C390.8 248.4 384.8 251 382 252.5 C379.2 254 377.2 255 376 254.8 C374.8 254.6 373.7 252.9 374.5 251.5 C375.3 250.1 379 248.5 381 246.5 C383 244.5 385.5 242.2 386.5 239.5 C387.5 236.8 386.2 232.2 387 230 C387.8 227.8 389.7 224.7 391 226 Z" fill="#f6d044" stroke="#1a1a1a" stroke-width="1" stroke-linejoin="round" stroke-linecap="round" /><path d="M367 252 C367.8 251.2 369.5 250.1 371 250 C372.5 249.9 374.9 250.7 376 251.5 C377.1 252.3 377.8 253.9 377.5 255 C377.2 256.1 375.4 257.7 374 258 C372.6 258.3 370.2 257.6 369 257 C367.8 256.4 366.8 255.3 366.5 254.5 C366.2 253.7 366.2 252.8 367 252 Z" fill="#f6dac8" stroke="#1a1a1a" stroke-width="0.8" stroke-linejoin="round" stroke-linecap="round" /><path d="M355 249 C355.6 249 356.5 251.1 357.5 252 C358.5 252.9 360.7 253.8 361 254.5 C361.3 255.2 360.3 256.3 359.5 256.5 C358.7 256.7 356.9 256.2 356 255.5 C355.1 254.8 354.2 253.1 354 252 C353.8 250.9 354.4 249 355 249 Z" fill="#f6dac8" stroke="#1a1a1a" stroke-width="0.8" stroke-linejoin="round" stroke-linecap="round" /><path d="M356 236 C356.5 237.3 357.7 241.6 359 244 C360.3 246.4 362.4 248.9 364 250.5 C365.6 252.1 367.8 253 368.5 253.5" fill="none" stroke="#1a1a1a" stroke-width="0.9" stroke-linejoin="round" stroke-linecap="round" /><path d="M357.4 218.3 C357.6 216.9 358.8 215.4 360.4 214.2 C361.9 213 364.8 211.1 366.9 211.3 C368.9 211.5 371.4 213.9 372.5 215.4 C373.6 216.9 373.6 218.5 373.3 220.1 C373.1 221.7 372.2 223.5 371 224.8 C369.7 226.2 367.4 227.7 365.9 228.1 C364.4 228.5 363 228 361.9 227.2 C360.8 226.4 359.9 224.5 359.2 223.1 C358.4 221.6 357.2 219.8 357.4 218.3 Z" fill="#f6dac8" stroke="#1a1a1a" stroke-width="1" stroke-linejoin="round" stroke-linecap="round" /><path d="M361.500 218 Q363.500 219.200 365.600 218.600 M367.600 219.500 L368.200 222 M362.500 224.600 Q364.300 226 366.300 225" fill="none" stroke="#1a1a1a" stroke-width="0.9" stroke-linejoin="round" stroke-linecap="round" /><path d="M346.3 214.2 C346.5 211 347.1 207.8 349.2 205.4 C351.2 202.9 355.4 199.9 358.6 199.5 C361.8 199.1 366.1 201 368.6 203 C371.2 205 373.2 209.6 373.9 211.6 C374.7 213.7 373.8 215.5 373 215.4 C372.2 215.3 370.4 210.9 369.2 210.9 C368 210.9 367.4 214.3 365.9 215.4 C364.4 216.5 361.8 216.5 360.4 217.5 C359 218.5 357.6 219.9 357.4 221.5 C357.2 223.1 358.2 225.2 359.2 227.2 C360.2 229.2 362.4 231.3 363.3 233.7 C364.2 236 364.9 240 364.5 241.4 C364.1 242.7 362.6 242.9 361.2 241.9 C359.8 241 357.7 237.1 356.2 235.5 C354.8 233.8 354 233.7 352.7 231.9 C351.4 230.1 349.3 227.8 348.2 224.8 C347.2 221.9 346.2 217.5 346.3 214.2 Z" fill="#6b2b1c" stroke="#1a1a1a" stroke-width="1.1" stroke-linejoin="round" stroke-linecap="round" /><path d="M356 228.4 A2.6 2.6 0 0 1 358.6 231.9 A2.7 2.7 0 0 1 360.4 236 A2.4 2.4 0 0 1 362.4 239.6" fill="none" stroke="#1a1a1a" stroke-width="0.8" stroke-linejoin="round" stroke-linecap="round" /><g transform="translate(-142.500 -1.100)"><path d="M599.7 284.9 C598.6 285.1 598.3 287.1 598.5 288.3 C598.7 289.5 600 291.2 601.1 292.3 C602.2 293.5 604.3 295.4 605.2 295.4 C606.1 295.4 606.6 293.8 606.6 292.3 C606.6 290.9 606.5 288.1 605.4 286.9 C604.2 285.6 600.9 284.6 599.7 284.9 Z" fill="#264f7c" stroke="#1a1a1a" stroke-width="0.9"/><path d="M624 286.3 C623.2 287.1 624.1 289.1 624.6 290.3 C625.2 291.6 626.4 293.5 627.2 293.8 C628.1 294 629.3 293.1 629.7 291.7 C630 290.4 630.2 286.6 629.3 285.7 C628.3 284.8 624.8 285.5 624 286.3 Z" fill="#264f7c" stroke="#1a1a1a" stroke-width="0.9"/><path d="M597.7 260.6 C598.4 259 602.1 256.9 604.2 256.5 C606.3 256.1 608.4 258.4 610.2 258.1 C612.1 257.9 613.5 256 615.3 254.9 C617.1 253.8 619.1 251 620.8 251.5 C622.5 252 624.3 255.3 625.4 257.9 C626.5 260.5 626.9 263.8 627.4 267 C628 270.2 628.2 274.1 628.5 277.2 C628.8 280.2 630.1 283.8 629.3 285.5 C628.5 287.1 625 287.8 623.6 286.9 C622.2 286 621.8 282.2 620.8 280.2 C619.8 278.2 618.5 276.6 617.5 274.7 C616.6 272.9 615.8 269 615.1 269.1 C614.4 269.1 613.9 273.2 613.1 275.1 C612.3 277.1 611.4 278.8 610.2 280.8 C609.1 282.9 607.8 286.9 606 287.5 C604.2 288.1 600.1 286.1 599.3 284.5 C598.5 282.8 600.7 279.7 601.3 277.6 C602 275.4 603.6 273.4 603.4 271.5 C603.1 269.6 600.7 267.9 599.7 266 C598.8 264.2 597 262.2 597.7 260.6 Z" fill="#8fbdcc" stroke="#1a1a1a" stroke-width="1.2" stroke-linejoin="round" stroke-linecap="round" /><path d="M613.9 260 C614 260.8 614.3 263.5 614.5 265 C614.7 266.5 615 268.4 615.1 269.1" fill="none" stroke="#1a1a1a" stroke-width="0.9" stroke-linejoin="round" stroke-linecap="round" /><path d="M593.4 213.4 C594.4 213.6 596.7 216.3 598.5 217.4 C600.3 218.6 602.3 220.5 604.2 220.5 C606 220.5 607.9 218.8 609.6 217.4 C611.4 216.1 613.1 213.9 614.7 212.4 C616.3 210.9 618.1 207 619.4 208.3 C620.6 209.7 621.4 216.8 622 220.5 C622.6 224.2 622.8 227.2 623 230.6 C623.2 234 623.2 237.9 623 240.7 C622.8 243.6 622.6 246 622 247.8 C621.4 249.7 620.7 251.3 619.6 251.9 C618.4 252.4 616.1 250.6 615.1 251.3 C614.1 251.9 614.5 254.6 613.7 255.7 C612.9 256.9 611.5 258.1 610.2 258.1 C609 258.2 607.5 256.1 606.2 256.1 C604.8 256.1 603.4 257.3 602.1 258.1 C600.9 259 600.2 261.4 598.9 261.4 C597.6 261.3 595.7 260 594.5 257.9 C593.2 255.8 592.2 252 591.6 248.8 C591 245.6 590.8 242.4 590.8 238.7 C590.8 235 591.1 230.3 591.4 226.6 C591.8 222.8 592.5 218.6 592.8 216.4 C593.2 214.2 592.5 213.2 593.4 213.4 Z" fill="#2e6496" stroke="#1a1a1a" stroke-width="1.2" stroke-linejoin="round" stroke-linecap="round" /><path d="M619.4 208.3 C618.4 209.4 615.6 212.2 613.7 214.4 C611.7 216.6 609.2 219.4 607.6 221.5 C606 223.6 604.6 225 604.2 227 C603.8 228.9 605 232 605.2 233" fill="none" stroke="#1a1a1a" stroke-width="1" stroke-linejoin="round" stroke-linecap="round" /><path d="M593.4 213.4 C594.2 214.2 596.5 216.8 597.9 218.5 C599.3 220.1 600.9 222.1 601.9 223.5 C603 224.9 603.8 226.4 604.2 227" fill="none" stroke="#1a1a1a" stroke-width="1" stroke-linejoin="round" stroke-linecap="round" /><path d="M597.7 225.5 C597.4 227.4 595.8 233 596.1 236.7 C596.3 240.4 597.8 244.8 599.1 247.8 C600.5 250.8 603.3 253.4 604.2 254.5" fill="none" stroke="#1a1a1a" stroke-width="0.9" stroke-linejoin="round" stroke-linecap="round" /><path d="M615.9 226.6 C616.1 228.2 617.7 233.1 617.3 236.7 C617 240.2 614.5 246 613.9 247.8" fill="none" stroke="#1a1a1a" stroke-width="0.9" stroke-linejoin="round" stroke-linecap="round" /><circle cx="600.5" cy="229.6" r="1.4" fill="#6fbf3f" stroke="#1a1a1a" stroke-width="0.5"/><path d="M613.9,248.4 L617.9,250.9 L616.7,253.3 L612.9,250.9 Z" fill="#fff" stroke="#1a1a1a" stroke-width="0.7"/><path d="M605 252.5 C604 253.2 603.9 254.9 604.2 255.9 C604.4 256.9 605.6 257.9 606.6 258.5 C607.6 259.1 609.2 259.8 610.2 259.6 C611.3 259.4 612.5 258.4 613.1 257.3 C613.6 256.3 614 254.3 613.5 253.3 C613 252.3 611.7 251.4 610.2 251.3 C608.8 251.1 606 251.7 605 252.5 Z" fill="#f6dac8" stroke="#1a1a1a" stroke-width="0.8"/><path d="M607.4,253.7 L608.8,258.1 M609.8,252.9 L611.1,257.7" fill="none" stroke="#1a1a1a" stroke-width="0.6" stroke-linejoin="round" stroke-linecap="round" /></g><g transform="translate(1071 1.300) scale(-1 1)"><path d="M602.500 208 L619.500 211 L612 224 L606 219 Z" fill="#f6dac8"/><path d="M598 196 C598.5 195.2 599.7 194.4 601 194.5 C602.3 194.6 605.4 195.5 606 196.5 C606.6 197.5 605.4 199.7 604.5 200.5 C603.6 201.3 601.6 201.7 600.5 201.5 C599.4 201.3 598.4 200.4 598 199.5 C597.6 198.6 597.5 196.8 598 196 Z" fill="#6a2e1c" stroke="#1a1a1a" stroke-width="0.7"/><path d="M601.5 196.5 C603.2 195.2 606.7 197.6 610 198 C613.3 198.4 619.4 197.9 621.5 198.8 C623.6 199.7 622.6 202 622.6 203.5 C622.6 205 622 206.5 621.4 208 C620.8 209.5 620.1 211.1 619 212.4 C617.9 213.7 616.4 215.1 615 215.8 C613.6 216.5 612.1 217 610.5 216.8 C608.9 216.6 606.9 215.7 605.5 214.6 C604.1 213.5 603.2 212 602.3 210.5 C601.4 209 600.1 207.8 600 205.5 C599.9 203.2 599.8 197.8 601.5 196.5 Z" fill="#f6dac8" stroke="#1a1a1a" stroke-width="1.2" stroke-linejoin="round" stroke-linecap="round" /><path d="M600.8 199.8 C600.3 198.8 598.8 198.2 598 198.3 C597.2 198.4 596 199.4 595.8 200.3 C595.6 201.2 596 203 596.6 204 C597.2 205 598.8 206.2 599.5 206.3 C600.2 206.4 600.8 205.6 601 204.5 C601.2 203.4 601.3 200.8 600.8 199.8 Z" fill="#f6dac8" stroke="#1a1a1a" stroke-width="1" stroke-linejoin="round" stroke-linecap="round" /><circle cx="618.300" cy="201.600" r="0.900" fill="#1a1a1a"/><circle cx="611.200" cy="201.600" r="0.900" fill="#1a1a1a"/><path d="M618.200 203.500 Q619.600 208 617.800 209.300 Q616.300 210 615 209.200" fill="none" stroke="#1a1a1a" stroke-width="1" stroke-linejoin="round" stroke-linecap="round" /><path d="M599.6 193 C599.7 191.8 599.7 189.5 600.5 188 C601.3 186.5 602.8 185.1 604.5 184.2 C606.2 183.3 608.5 182.7 610.5 182.7 C612.5 182.7 614.8 183.2 616.5 184 C618.2 184.8 619.8 186.2 620.8 187.8 C621.8 189.4 622.4 192 622.8 193.5 C623.2 195 625 196.2 623 197 C621 197.8 614.8 198.2 611 198 C607.2 197.8 601.9 196.3 600 195.5 C598.1 194.7 599.5 194.2 599.6 193 Z" fill="#b97a2b" stroke="#1a1a1a" stroke-width="1.1" stroke-linejoin="round" stroke-linecap="round" /><path d="M593.8 192.8 C594.1 192.4 596 192.2 597.5 192.4 C599 192.6 600.8 193.7 603 194.2 C605.2 194.7 608.3 195.3 611 195.6 C613.7 195.9 616.8 196 619 196 C621.2 196 623.1 195.4 624.5 195.6 C625.9 195.8 627.2 196.6 627.2 197.3 C627.2 198 626.2 199.2 624.5 199.6 C622.8 200 619.7 200.1 617 200 C614.3 199.9 611.2 199.5 608.5 199 C605.8 198.5 602.7 197.7 600.5 197 C598.3 196.3 596.6 195.5 595.5 194.8 C594.4 194.1 593.5 193.2 593.8 192.8 Z" fill="#a96b22" stroke="#1a1a1a" stroke-width="1.1" stroke-linejoin="round" stroke-linecap="round" /></g></g><rect x="325.3" y="161.7" width="207.100" height="144.200" rx="14" ry="14" fill="none" stroke="#404040" stroke-width="1.200"/><clipPath id="c2"><rect x="548.8" y="162.2" width="206.100" height="143.200" rx="13.500" ry="13.500"/></clipPath><g clip-path="url(#c2)"><path d="M561 192 L556.800 205 L555 218.500 L572 217.500 L572 190 Z" fill="#6dbd50" filter="url(#fz)"/><path d="M726 252 L734 254 L739.500 266 L739 271 L720 271 Z" fill="#6dbd50" filter="url(#fz)"/><path d="M560.5 193.4 A3.5 3.5 0 0 1 563.3 188.5 A4.7 4.7 0 0 1 570.3 185.7 A4.5 4.5 0 0 1 577.3 183.6 A5.7 5.7 0 0 1 585 178.7 A5.6 5.6 0 0 1 594 178 A4.9 4.9 0 0 1 601.7 175.9 A4.8 4.8 0 0 1 609.3 177.3 A4.5 4.5 0 0 1 616.3 175.2 A4.1 4.1 0 0 1 622 178.7 A4.2 4.2 0 0 1 628.2 181.5 A4 4 0 0 1 634.4 183 A3.9 3.9 0 0 1 640 185.7 L640 185.7 A6.7 6.7 0 0 1 650 182.5 A9.4 9.4 0 0 1 664.7 183 A10.1 10.1 0 0 1 680 179.4 A10.8 10.8 0 0 1 696.8 179.4 A8.3 8.3 0 0 1 709.3 183 A4.6 4.6 0 0 1 711 190 A4.9 4.9 0 0 1 716.3 195.5 A8.9 8.9 0 0 1 729.6 199.6 A7.8 7.8 0 0 1 735 210.5 A7.4 7.4 0 0 1 736 222 A7.2 7.2 0 0 1 733.5 233 A6.4 6.4 0 0 1 730.5 242.5 A5.2 5.2 0 0 1 727.5 250 L717.700 254.300 L717.7 254.3 A6.3 6.3 0 0 1 728.2 254 A3.3 3.3 0 0 1 733.5 255.5 L737 262 L737 270.500 L655 270.500 L655 216.800 L559.500 217.500 L559.500 200 Z" fill="#6dbd50"/><path d="M716 197 Q726 202 730 213 Q732 224 728 240" fill="none" stroke="#8fd078" stroke-width="2.500" opacity="0.45" filter="url(#fz)"/><path d="M559 214 Q559 200 565 190" fill="none" stroke="#b5e0a3" stroke-width="3" opacity="0.7" filter="url(#fz)"/><path d="M733 257 L739.500 268" fill="none" stroke="#b5e0a3" stroke-width="3" opacity="0.6" filter="url(#fz)"/><path d="M560.5 193.4 A3.5 3.5 0 0 1 563.3 188.5 A4.7 4.7 0 0 1 570.3 185.7 A4.5 4.5 0 0 1 577.3 183.6 A5.7 5.7 0 0 1 585 178.7 A5.6 5.6 0 0 1 594 178 A4.9 4.9 0 0 1 601.7 175.9 A4.8 4.8 0 0 1 609.3 177.3 A4.5 4.5 0 0 1 616.3 175.2 A4.1 4.1 0 0 1 622 178.7 A4.2 4.2 0 0 1 628.2 181.5 A4 4 0 0 1 634.4 183 A3.9 3.9 0 0 1 640 185.7 A5.2 5.2 0 0 1 645.6 192 A4.1 4.1 0 0 1 651.2 195.5 A3.5 3.5 0 0 1 656.7 197" fill="none" stroke="#1a1a1a" stroke-width="1.25" stroke-linejoin="round" stroke-linecap="round" /><path d="M656.7 197 A2.9 2.9 0 0 1 659.5 200.5 A3.7 3.7 0 0 1 664 204" fill="none" stroke="#1a1a1a" stroke-width="1.25" stroke-linejoin="round" stroke-linecap="round" /><path d="M640 185.7 A6.7 6.7 0 0 1 650 182.5 A9.4 9.4 0 0 1 664.7 183 A10.1 10.1 0 0 1 680 179.4 A10.8 10.8 0 0 1 696.8 179.4 A8.3 8.3 0 0 1 709.3 183 A4.6 4.6 0 0 1 711 190 A4.9 4.9 0 0 1 716.3 195.5 A8.9 8.9 0 0 1 729.6 199.6 A7.8 7.8 0 0 1 735 210.5 A7.4 7.4 0 0 1 736 222 A7.2 7.2 0 0 1 733.5 233 A6.4 6.4 0 0 1 730.5 242.5 A5.2 5.2 0 0 1 727.5 250" fill="none" stroke="#1a1a1a" stroke-width="1.25" stroke-linejoin="round" stroke-linecap="round" /><path d="M717.7 254.3 A6.3 6.3 0 0 1 728.2 254 A3.3 3.3 0 0 1 733.5 255.5" fill="none" stroke="#1a1a1a" stroke-width="1.25" stroke-linejoin="round" stroke-linecap="round" /><path d="M635.5 208 A3.5 3.5 0 0 1 641 206.5 A3.6 3.6 0 0 1 646.5 208.5 A2.8 2.8 0 0 1 650.5 210.5" fill="none" stroke="#1a1a1a" stroke-width="1.1" stroke-linejoin="round" stroke-linecap="round" /><path d="M583.300 204.300 L582.200 208.600" fill="none" stroke="#1a1a1a" stroke-width="1.2" stroke-linejoin="round" stroke-linecap="round" /><path d="M666.8 214 A3.4 3.4 0 0 1 671 210.5 A4.5 4.5 0 0 1 676.6 215 A5.2 5.2 0 0 1 682.9 220.5 A4.3 4.3 0 0 1 687 226" fill="none" stroke="#1a1a1a" stroke-width="1.1" stroke-linejoin="round" stroke-linecap="round" /><path d="M689.8 228 A3.1 3.1 0 0 0 694 225.8 A4.2 4.2 0 0 0 700.3 226.5 A5.1 5.1 0 0 0 705.2 220.5" fill="none" stroke="#1a1a1a" stroke-width="1.1" stroke-linejoin="round" stroke-linecap="round" /><path d="M663.8 232.5 A2.5 2.5 0 0 1 662 236.2 A3.2 3.2 0 0 1 666 239.7 A4.7 4.7 0 0 1 673.8 241 A4.6 4.6 0 0 1 681.5 240.4 A4.1 4.1 0 0 1 688.4 240.4 A4.2 4.2 0 0 1 694 244.5 A4.1 4.1 0 0 1 700.3 247.3 A3.7 3.7 0 0 1 700.3 253.5 A3.4 3.4 0 0 1 695.4 256.5 A2.8 2.8 0 0 1 694 261 A3.1 3.1 0 0 1 689.8 264" fill="none" stroke="#1a1a1a" stroke-width="1.1" stroke-linejoin="round" stroke-linecap="round" /><path d="M562 266 Q600 265 655 263 L737 262.500 Q741 266 739 271.800 L600 272.300 L563 272.600 Q560.500 269 562 266 Z" fill="#62bb40" filter="url(#fz1)"/><path d="M563.5 275.5 C566.2 275 573.9 275 580 274.8 C586.1 274.6 591.7 274.6 600 274.3 C608.3 274 620 273.1 630 272.8 C640 272.5 647.3 272.5 660 272.3 C672.7 272.1 697.7 271.2 706 271.5 C714.3 271.8 709.9 273 710 274 C710.1 275 707 276.3 706.5 277.5 C706 278.7 705.9 279.8 707 281 C708.1 282.2 711.6 283.3 713 284.5 C714.4 285.7 714.7 286.6 715.5 288 C716.3 289.4 718.1 291.4 717.7 292.6 C717.3 293.9 716 294.8 713 295.5 C710 296.2 706.2 296.4 700 296.8 C693.8 297.2 686 297.5 676 297.8 C666 298.1 652.7 298.5 640 298.5 C627.3 298.5 611.3 298.2 600 298 C588.7 297.8 577.6 297.8 572 297 C566.4 296.2 566.7 294.8 566.5 293.5 C566.3 292.2 571.1 290.8 571 289.5 C570.9 288.2 566 286.9 566 285.5 C566 284.1 571.3 282.2 571 281 C570.7 279.8 565.2 278.9 564 278 C562.8 277.1 560.8 276 563.5 275.5 Z" fill="#606060"/><path d="M661 271.500 L729.600 269.600" fill="none" stroke="#1a1a1a" stroke-width="1" stroke-linejoin="round" stroke-linecap="round" /><path d="M666.800 244.500 L668.800 270.600 L670.600 270.600 Z M673.300 262 L673.100 270.500 L674.600 270.500 Z" fill="#7a4a1d" stroke="#3a2510" stroke-width="0.500"/><path d="M699.900 203.800 L689.800 216 L690.300 226.300 L688 226.500 L686.600 211 L688.400 214 Z" fill="#8a4f1f" stroke="#3a2510" stroke-width="0.500"/><path d="M662 227 C662 225.7 662.5 223.5 663.3 222.5 C664.1 221.5 665.7 221 667 220.8 C668.3 220.6 669.8 220.8 671 221.3 C672.2 221.8 674.1 222.8 674.5 224 C674.9 225.2 674.2 227.2 673.5 228.3 C672.8 229.4 671.2 230.2 670 230.8 C668.8 231.5 667.6 232.3 666.5 232.2 C665.4 232.1 664 231.2 663.2 230.3 C662.5 229.4 662 228.3 662 227 Z" fill="#d3264a" stroke="#7d0f28" stroke-width="0.700"/><path d="M664.500 224.500 Q667.500 222 671.500 224 Q672.500 226.500 670 228.500 M664.300 227.800 Q667.500 230 671 228 M666.800 225.300 Q668.500 227.300 670.300 225.300 M663.500 229.500 Q666.500 231.500 669.500 230.500" fill="none" stroke="#8d1230" stroke-width="0.700"/><path d="M666 226 Q668 228.500 670.500 226.500 Q669 224 666 226 Z" fill="#a8183a"/><path d="M566.800 217.900 L568.900 217.800 Q610 215.300 654.500 214.500 Q655.300 236 655 254 L568.600 254 Z" fill="#fff" stroke="#1a1a1a" stroke-width="1.25" stroke-linejoin="round" stroke-linecap="round" /><path d="M565 254.800 Q610 253.600 655 253.500 L660.500 260.200 L660.200 262.900 Q610 263.300 566.500 265 Z" fill="#fff"/><path d="M565 254.800 Q610 253.600 655 253.500 L660.500 260.200 L660.200 262.900 M566 261.400 Q610 259.800 659.800 259.300 M567 264.800 Q610 263.300 660.200 262.800" fill="none" stroke="#1a1a1a" stroke-width="1.15" stroke-linejoin="round" stroke-linecap="round" /><path d="M647.500 263 L647.300 274.500 Q647.600 276.500 649.800 276.300 L650 268.500 Q650.200 266.300 652.300 266.300 Q654.800 266.500 655.200 269 L655.400 289 Q658.500 290.300 662 289.300 L662.200 263 Z" fill="#fff" stroke="#1a1a1a" stroke-width="1.1" stroke-linejoin="round" stroke-linecap="round" /><path d="M651.200 264.600 Q652.800 267.300 654.400 264.600" fill="#6dbd50" stroke="#1a1a1a" stroke-width="0.800" stroke-linejoin="round" stroke-linecap="round" /><path d="M599.7 284.9 C598.6 285.1 598.3 287.1 598.5 288.3 C598.7 289.5 600 291.2 601.1 292.3 C602.2 293.5 604.3 295.4 605.2 295.4 C606.1 295.4 606.6 293.8 606.6 292.3 C606.6 290.9 606.5 288.1 605.4 286.9 C604.2 285.6 600.9 284.6 599.7 284.9 Z" fill="#264f7c" stroke="#1a1a1a" stroke-width="0.9"/><path d="M624 286.3 C623.2 287.1 624.1 289.1 624.6 290.3 C625.2 291.6 626.4 293.5 627.2 293.8 C628.1 294 629.3 293.1 629.7 291.7 C630 290.4 630.2 286.6 629.3 285.7 C628.3 284.8 624.8 285.5 624 286.3 Z" fill="#264f7c" stroke="#1a1a1a" stroke-width="0.9"/><path d="M597.7 260.6 C598.4 259 602.1 256.9 604.2 256.5 C606.3 256.1 608.4 258.4 610.2 258.1 C612.1 257.9 613.5 256 615.3 254.9 C617.1 253.8 619.1 251 620.8 251.5 C622.5 252 624.3 255.3 625.4 257.9 C626.5 260.5 626.9 263.8 627.4 267 C628 270.2 628.2 274.1 628.5 277.2 C628.8 280.2 630.1 283.8 629.3 285.5 C628.5 287.1 625 287.8 623.6 286.9 C622.2 286 621.8 282.2 620.8 280.2 C619.8 278.2 618.5 276.6 617.5 274.7 C616.6 272.9 615.8 269 615.1 269.1 C614.4 269.1 613.9 273.2 613.1 275.1 C612.3 277.1 611.4 278.8 610.2 280.8 C609.1 282.9 607.8 286.9 606 287.5 C604.2 288.1 600.1 286.1 599.3 284.5 C598.5 282.8 600.7 279.7 601.3 277.6 C602 275.4 603.6 273.4 603.4 271.5 C603.1 269.6 600.7 267.9 599.7 266 C598.8 264.2 597 262.2 597.7 260.6 Z" fill="#8fbdcc" stroke="#1a1a1a" stroke-width="1.2" stroke-linejoin="round" stroke-linecap="round" /><path d="M613.9 260 C614 260.8 614.3 263.5 614.5 265 C614.7 266.5 615 268.4 615.1 269.1" fill="none" stroke="#1a1a1a" stroke-width="0.9" stroke-linejoin="round" stroke-linecap="round" /><path d="M594.5 208.3 C595.5 207.7 597.5 210.9 599.1 212.4 C600.7 213.9 602.4 216.1 604.2 217.4 C605.9 218.8 607.8 220.5 609.6 220.5 C611.5 220.5 613.5 218.6 615.3 217.4 C617.1 216.3 619.3 212.9 620.4 213.4 C621.5 213.9 621.5 217.6 622 220.5 C622.4 223.4 622.8 227.2 623 230.6 C623.2 234 623.2 237.9 623 240.7 C622.8 243.6 622.6 246 622 247.8 C621.4 249.7 620.7 251.3 619.6 251.9 C618.4 252.4 616.1 250.6 615.1 251.3 C614.1 251.9 614.5 254.6 613.7 255.7 C612.9 256.9 611.5 258.1 610.2 258.1 C609 258.2 607.5 256.1 606.2 256.1 C604.8 256.1 603.4 257.3 602.1 258.1 C600.9 259 600.2 261.4 598.9 261.4 C597.6 261.3 595.7 260 594.5 257.9 C593.2 255.8 592.2 252 591.6 248.8 C591 245.6 590.8 242.4 590.8 238.7 C590.8 235 591.1 230.3 591.4 226.6 C591.8 222.8 592.3 219.5 592.8 216.4 C593.3 213.4 593.4 209 594.5 208.3 Z" fill="#2e6496" stroke="#1a1a1a" stroke-width="1.2" stroke-linejoin="round" stroke-linecap="round" /><path d="M594.5 208.3 C595.4 209.4 598.2 212.2 600.1 214.4 C602.1 216.6 604.6 219.4 606.2 221.5 C607.8 223.6 609.1 226.1 609.6 227" fill="none" stroke="#1a1a1a" stroke-width="1" stroke-linejoin="round" stroke-linecap="round" /><path d="M620.4 213.4 C619.6 214.2 617.3 216.8 615.9 218.5 C614.5 220.1 612.9 222.1 611.9 223.5 C610.8 224.9 610.2 225.4 609.6 227 C609.1 228.5 608.8 232 608.6 233" fill="none" stroke="#1a1a1a" stroke-width="1" stroke-linejoin="round" stroke-linecap="round" /><path d="M597.7 225.5 C597.4 227.4 595.8 233 596.1 236.7 C596.3 240.4 597.8 244.8 599.1 247.8 C600.5 250.8 603.3 253.4 604.2 254.5" fill="none" stroke="#1a1a1a" stroke-width="0.9" stroke-linejoin="round" stroke-linecap="round" /><path d="M615.9 226.6 C616.1 228.2 617.7 233.1 617.3 236.7 C617 240.2 614.5 246 613.9 247.8" fill="none" stroke="#1a1a1a" stroke-width="0.9" stroke-linejoin="round" stroke-linecap="round" /><circle cx="602.6" cy="229.6" r="1.4" fill="#6fbf3f" stroke="#1a1a1a" stroke-width="0.5"/><path d="M613.9,248.4 L617.9,250.9 L616.7,253.3 L612.9,250.9 Z" fill="#fff" stroke="#1a1a1a" stroke-width="0.7"/><path d="M605 252.5 C604 253.2 603.9 254.9 604.2 255.9 C604.4 256.9 605.6 257.9 606.6 258.5 C607.6 259.1 609.2 259.8 610.2 259.6 C611.3 259.4 612.5 258.4 613.1 257.3 C613.6 256.3 614 254.3 613.5 253.3 C613 252.3 611.7 251.4 610.2 251.3 C608.8 251.1 606 251.7 605 252.5 Z" fill="#f6dac8" stroke="#1a1a1a" stroke-width="0.8"/><path d="M607.4,253.7 L608.8,258.1 M609.8,252.9 L611.1,257.7" fill="none" stroke="#1a1a1a" stroke-width="0.6" stroke-linejoin="round" stroke-linecap="round" /><path d="M598 196 C598.5 195.2 599.7 194.4 601 194.5 C602.3 194.6 605.4 195.5 606 196.5 C606.6 197.5 605.4 199.7 604.5 200.5 C603.6 201.3 601.6 201.7 600.5 201.5 C599.4 201.3 598.4 200.4 598 199.5 C597.6 198.6 597.5 196.8 598 196 Z" fill="#6a2e1c" stroke="#1a1a1a" stroke-width="0.7"/><path d="M602.500 208 L619.500 211 L612 224 L606 219 Z" fill="#f6dac8"/><path d="M601.5 196.5 C603.2 195.2 606.7 197.6 610 198 C613.3 198.4 619.4 197.9 621.5 198.8 C623.6 199.7 622.6 202 622.6 203.5 C622.6 205 622 206.5 621.4 208 C620.8 209.5 620.1 211.1 619 212.4 C617.9 213.7 616.4 215.1 615 215.8 C613.6 216.5 612.1 217 610.5 216.8 C608.9 216.6 606.9 215.7 605.5 214.6 C604.1 213.5 603.2 212 602.3 210.5 C601.4 209 600.1 207.8 600 205.5 C599.9 203.2 599.8 197.8 601.5 196.5 Z" fill="#f6dac8" stroke="#1a1a1a" stroke-width="1.2" stroke-linejoin="round" stroke-linecap="round" /><path d="M600.8 199.8 C600.3 198.8 598.8 198.2 598 198.3 C597.2 198.4 596 199.4 595.8 200.3 C595.6 201.2 596 203 596.6 204 C597.2 205 598.8 206.2 599.5 206.3 C600.2 206.4 600.8 205.6 601 204.5 C601.2 203.4 601.3 200.8 600.8 199.8 Z" fill="#f6dac8" stroke="#1a1a1a" stroke-width="1" stroke-linejoin="round" stroke-linecap="round" /><path d="M608 203.100 Q610.500 205 612.800 204.500 M619.600 204.500 Q621 205.300 622.200 204.700 M617 203.800 Q617.800 207.500 616 208.800 M612.600 210 Q614.500 211.600 616.500 210.800" fill="none" stroke="#1a1a1a" stroke-width="1" stroke-linejoin="round" stroke-linecap="round" /><path d="M599.6 193 C599.7 191.8 599.7 189.5 600.5 188 C601.3 186.5 602.8 185.1 604.5 184.2 C606.2 183.3 608.5 182.7 610.5 182.7 C612.5 182.7 614.8 183.2 616.5 184 C618.2 184.8 619.8 186.2 620.8 187.8 C621.8 189.4 622.4 192 622.8 193.5 C623.2 195 625 196.2 623 197 C621 197.8 614.8 198.2 611 198 C607.2 197.8 601.9 196.3 600 195.5 C598.1 194.7 599.5 194.2 599.6 193 Z" fill="#b97a2b" stroke="#1a1a1a" stroke-width="1.1" stroke-linejoin="round" stroke-linecap="round" /><path d="M593.8 192.8 C594.1 192.4 596 192.2 597.5 192.4 C599 192.6 600.8 193.7 603 194.2 C605.2 194.7 608.3 195.3 611 195.6 C613.7 195.9 616.8 196 619 196 C621.2 196 623.1 195.4 624.5 195.6 C625.9 195.8 627.2 196.6 627.2 197.3 C627.2 198 626.2 199.2 624.5 199.6 C622.8 200 619.7 200.1 617 200 C614.3 199.9 611.2 199.5 608.5 199 C605.8 198.5 602.7 197.7 600.5 197 C598.3 196.3 596.6 195.5 595.5 194.8 C594.4 194.1 593.5 193.2 593.8 192.8 Z" fill="#a96b22" stroke="#1a1a1a" stroke-width="1.1" stroke-linejoin="round" stroke-linecap="round" /><path d="M625.5 221.5 A1.9 1.9 0 0 1 628 219.8 A1.7 1.7 0 0 1 630.8 220 A1.8 1.8 0 0 1 633.2 221.5 A1.8 1.8 0 0 1 633.8 224.3 A1.8 1.8 0 0 1 632 226.6 A1.9 1.9 0 0 1 629 226.8 A1.7 1.7 0 0 1 626.8 225.3 A1.3 1.3 0 0 1 626.5 223.2 A1.2 1.2 0 0 1 625.5 221.5" fill="#fff" stroke="#1a1a1a" stroke-width="0.8" stroke-linejoin="round" stroke-linecap="round" /></g><rect x="548.3" y="161.7" width="207.100" height="144.200" rx="14" ry="14" fill="none" stroke="#404040" stroke-width="1.200"/><clipPath id="c3"><rect x="325.8" y="336.0" width="206.100" height="143.200" rx="13.500" ry="13.500"/></clipPath><g clip-path="url(#c3)"><g transform="translate(-218 177)"><path d="M559 194 L553.500 206 L551.500 219 L564 218 L564 193 Z" fill="#6dbd50" filter="url(#fz)"/><path d="M561 192 L556.800 205 L555 218.500 L572 217.500 L572 190 Z" fill="#6dbd50" filter="url(#fz)"/><path d="M726 252 L734 254 L739.500 266 L739 271 L720 271 Z" fill="#6dbd50" filter="url(#fz)"/><path d="M560.5 193.4 A3.5 3.5 0 0 1 563.3 188.5 A4.7 4.7 0 0 1 570.3 185.7 A4.5 4.5 0 0 1 577.3 183.6 A5.7 5.7 0 0 1 585 178.7 A5.6 5.6 0 0 1 594 178 A4.9 4.9 0 0 1 601.7 175.9 A4.8 4.8 0 0 1 609.3 177.3 A4.5 4.5 0 0 1 616.3 175.2 A4.1 4.1 0 0 1 622 178.7 A4.2 4.2 0 0 1 628.2 181.5 A4 4 0 0 1 634.4 183 A3.9 3.9 0 0 1 640 185.7 L640 185.7 A6.7 6.7 0 0 1 650 182.5 A9.4 9.4 0 0 1 664.7 183 A10.1 10.1 0 0 1 680 179.4 A10.8 10.8 0 0 1 696.8 179.4 A8.3 8.3 0 0 1 709.3 183 A4.6 4.6 0 0 1 711 190 A4.9 4.9 0 0 1 716.3 195.5 A8.9 8.9 0 0 1 729.6 199.6 A7.8 7.8 0 0 1 735 210.5 A7.4 7.4 0 0 1 736 222 A7.2 7.2 0 0 1 733.5 233 A6.4 6.4 0 0 1 730.5 242.5 A5.2 5.2 0 0 1 727.5 250 L717.700 254.300 L717.7 254.3 A6.3 6.3 0 0 1 728.2 254 A3.3 3.3 0 0 1 733.5 255.5 L737 262 L737 270.500 L655 270.500 L655 216.800 L559.500 217.500 L559.500 200 Z" fill="#6dbd50"/><path d="M716 197 Q726 202 730 213 Q732 224 728 240" fill="none" stroke="#8fd078" stroke-width="2.500" opacity="0.45" filter="url(#fz)"/><path d="M559 214 Q559 200 565 190" fill="none" stroke="#b5e0a3" stroke-width="3" opacity="0.7" filter="url(#fz)"/><path d="M733 257 L739.500 268" fill="none" stroke="#b5e0a3" stroke-width="3" opacity="0.6" filter="url(#fz)"/><path d="M560.5 193.4 A3.5 3.5 0 0 1 563.3 188.5 A4.7 4.7 0 0 1 570.3 185.7 A4.5 4.5 0 0 1 577.3 183.6 A5.7 5.7 0 0 1 585 178.7 A5.6 5.6 0 0 1 594 178 A4.9 4.9 0 0 1 601.7 175.9 A4.8 4.8 0 0 1 609.3 177.3 A4.5 4.5 0 0 1 616.3 175.2 A4.1 4.1 0 0 1 622 178.7 A4.2 4.2 0 0 1 628.2 181.5 A4 4 0 0 1 634.4 183 A3.9 3.9 0 0 1 640 185.7 A5.2 5.2 0 0 1 645.6 192 A4.1 4.1 0 0 1 651.2 195.5 A3.5 3.5 0 0 1 656.7 197" fill="none" stroke="#1a1a1a" stroke-width="1.25" stroke-linejoin="round" stroke-linecap="round" /><path d="M656.7 197 A2.9 2.9 0 0 1 659.5 200.5 A3.7 3.7 0 0 1 664 204" fill="none" stroke="#1a1a1a" stroke-width="1.25" stroke-linejoin="round" stroke-linecap="round" /><path d="M640 185.7 A6.7 6.7 0 0 1 650 182.5 A9.4 9.4 0 0 1 664.7 183 A10.1 10.1 0 0 1 680 179.4 A10.8 10.8 0 0 1 696.8 179.4 A8.3 8.3 0 0 1 709.3 183 A4.6 4.6 0 0 1 711 190 A4.9 4.9 0 0 1 716.3 195.5 A8.9 8.9 0 0 1 729.6 199.6 A7.8 7.8 0 0 1 735 210.5 A7.4 7.4 0 0 1 736 222 A7.2 7.2 0 0 1 733.5 233 A6.4 6.4 0 0 1 730.5 242.5 A5.2 5.2 0 0 1 727.5 250" fill="none" stroke="#1a1a1a" stroke-width="1.25" stroke-linejoin="round" stroke-linecap="round" /><path d="M717.7 254.3 A6.3 6.3 0 0 1 728.2 254 A3.3 3.3 0 0 1 733.5 255.5" fill="none" stroke="#1a1a1a" stroke-width="1.25" stroke-linejoin="round" stroke-linecap="round" /><path d="M635.5 208 A3.5 3.5 0 0 1 641 206.5 A3.6 3.6 0 0 1 646.5 208.5 A2.8 2.8 0 0 1 650.5 210.5" fill="none" stroke="#1a1a1a" stroke-width="1.1" stroke-linejoin="round" stroke-linecap="round" /><path d="M583.300 204.300 L582.200 208.600" fill="none" stroke="#1a1a1a" stroke-width="1.2" stroke-linejoin="round" stroke-linecap="round" /><path d="M666.8 214 A3.4 3.4 0 0 1 671 210.5 A4.5 4.5 0 0 1 676.6 215 A5.2 5.2 0 0 1 682.9 220.5 A4.3 4.3 0 0 1 687 226" fill="none" stroke="#1a1a1a" stroke-width="1.1" stroke-linejoin="round" stroke-linecap="round" /><path d="M689.8 228 A3.1 3.1 0 0 0 694 225.8 A4.2 4.2 0 0 0 700.3 226.5 A5.1 5.1 0 0 0 705.2 220.5" fill="none" stroke="#1a1a1a" stroke-width="1.1" stroke-linejoin="round" stroke-linecap="round" /><path d="M663.8 232.5 A2.5 2.5 0 0 1 662 236.2 A3.2 3.2 0 0 1 666 239.7 A4.7 4.7 0 0 1 673.8 241 A4.6 4.6 0 0 1 681.5 240.4 A4.1 4.1 0 0 1 688.4 240.4 A4.2 4.2 0 0 1 694 244.5 A4.1 4.1 0 0 1 700.3 247.3 A3.7 3.7 0 0 1 700.3 253.5 A3.4 3.4 0 0 1 695.4 256.5 A2.8 2.8 0 0 1 694 261 A3.1 3.1 0 0 1 689.8 264" fill="none" stroke="#1a1a1a" stroke-width="1.1" stroke-linejoin="round" stroke-linecap="round" /><path d="M562 266 Q600 265 655 263 L737 262.500 Q741 266 739 271.800 L600 272.300 L563 272.600 Q560.500 269 562 266 Z" fill="#62bb40" filter="url(#fz1)"/><path d="M562 277 C566.2 275.7 575.3 274.7 588 274 C600.7 273.3 621.3 273.2 638 273 C654.7 272.8 673.7 272.5 688 272.5 C702.3 272.5 717.8 272.1 724 272.8 C730.2 273.6 727.2 275.6 725.5 277 C723.8 278.4 715.1 279.7 713.5 281 C711.9 282.3 717.8 283.5 716 285 C714.2 286.5 711.8 288.7 703 290 C694.2 291.3 676.3 292.1 663 293 C649.7 293.9 635.5 295.1 623 295.5 C610.5 295.9 596.5 296.6 588 295.5 C579.5 294.4 576.2 291.2 572 289 C567.8 286.8 564.7 284 563 282 C561.3 280 557.8 278.3 562 277 Z" fill="#606060"/><path d="M661 271.500 L729.600 269.600" fill="none" stroke="#1a1a1a" stroke-width="1" stroke-linejoin="round" stroke-linecap="round" /><path d="M666.800 244.500 L668.800 270.600 L670.600 270.600 Z M673.300 262 L673.100 270.500 L674.600 270.500 Z" fill="#7a4a1d" stroke="#3a2510" stroke-width="0.500"/><path d="M699.900 203.800 L689.800 216 L690.300 226.300 L688 226.500 L686.600 211 L688.400 214 Z" fill="#8a4f1f" stroke="#3a2510" stroke-width="0.500"/><path d="M662 227 C662 225.7 662.5 223.5 663.3 222.5 C664.1 221.5 665.7 221 667 220.8 C668.3 220.6 669.8 220.8 671 221.3 C672.2 221.8 674.1 222.8 674.5 224 C674.9 225.2 674.2 227.2 673.5 228.3 C672.8 229.4 671.2 230.2 670 230.8 C668.8 231.5 667.6 232.3 666.5 232.2 C665.4 232.1 664 231.2 663.2 230.3 C662.5 229.4 662 228.3 662 227 Z" fill="#d3264a" stroke="#7d0f28" stroke-width="0.700"/><path d="M664.500 224.500 Q667.500 222 671.500 224 Q672.500 226.500 670 228.500 M664.300 227.800 Q667.500 230 671 228 M666.800 225.300 Q668.500 227.300 670.300 225.300 M663.500 229.500 Q666.500 231.500 669.500 230.500" fill="none" stroke="#8d1230" stroke-width="0.700"/><path d="M666 226 Q668 228.500 670.500 226.500 Q669 224 666 226 Z" fill="#a8183a"/><path d="M566.800 217.900 L568.900 217.800 Q610 215.300 654.500 214.500 Q655.300 236 655 254 L568.600 254 Z" fill="#fff" stroke="#1a1a1a" stroke-width="1.25" stroke-linejoin="round" stroke-linecap="round" /><path d="M565 254.800 Q610 253.600 655 253.500 L660.500 260.200 L660.200 262.900 Q610 263.300 566.500 265 Z" fill="#fff"/><path d="M565 254.800 Q610 253.600 655 253.500 L660.500 260.200 L660.200 262.900 M566 261.400 Q610 259.800 659.800 259.300 M567 264.800 Q610 263.300 660.200 262.800" fill="none" stroke="#1a1a1a" stroke-width="1.15" stroke-linejoin="round" stroke-linecap="round" /><path d="M647.500 263 L647.300 274.500 Q647.600 276.500 649.800 276.300 L650 268.500 Q650.200 266.300 652.300 266.300 Q654.800 266.500 655.200 269 L655.400 289 Q658.500 290.300 662 289.300 L662.200 263 Z" fill="#fff" stroke="#1a1a1a" stroke-width="1.1" stroke-linejoin="round" stroke-linecap="round" /><path d="M651.200 264.600 Q652.800 267.300 654.400 264.600" fill="#6dbd50" stroke="#1a1a1a" stroke-width="0.800" stroke-linejoin="round" stroke-linecap="round" /><path d="M599.7 284.9 C598.6 285.1 598.3 287.1 598.5 288.3 C598.7 289.5 600 291.2 601.1 292.3 C602.2 293.5 604.3 295.4 605.2 295.4 C606.1 295.4 606.6 293.8 606.6 292.3 C606.6 290.9 606.5 288.1 605.4 286.9 C604.2 285.6 600.9 284.6 599.7 284.9 Z" fill="#264f7c" stroke="#1a1a1a" stroke-width="0.9"/><path d="M624 286.3 C623.2 287.1 624.1 289.1 624.6 290.3 C625.2 291.6 626.4 293.5 627.2 293.8 C628.1 294 629.3 293.1 629.7 291.7 C630 290.4 630.2 286.6 629.3 285.7 C628.3 284.8 624.8 285.5 624 286.3 Z" fill="#264f7c" stroke="#1a1a1a" stroke-width="0.9"/><path d="M597.7 260.6 C598.4 259 602.1 256.9 604.2 256.5 C606.3 256.1 608.4 258.4 610.2 258.1 C612.1 257.9 613.5 256 615.3 254.9 C617.1 253.8 619.1 251 620.8 251.5 C622.5 252 624.3 255.3 625.4 257.9 C626.5 260.5 626.9 263.8 627.4 267 C628 270.2 628.2 274.1 628.5 277.2 C628.8 280.2 630.1 283.8 629.3 285.5 C628.5 287.1 625 287.8 623.6 286.9 C622.2 286 621.8 282.2 620.8 280.2 C619.8 278.2 618.5 276.6 617.5 274.7 C616.6 272.9 615.8 269 615.1 269.1 C614.4 269.1 613.9 273.2 613.1 275.1 C612.3 277.1 611.4 278.8 610.2 280.8 C609.1 282.9 607.8 286.9 606 287.5 C604.2 288.1 600.1 286.1 599.3 284.5 C598.5 282.8 600.7 279.7 601.3 277.6 C602 275.4 603.6 273.4 603.4 271.5 C603.1 269.6 600.7 267.9 599.7 266 C598.8 264.2 597 262.2 597.7 260.6 Z" fill="#8fbdcc" stroke="#1a1a1a" stroke-width="1.2" stroke-linejoin="round" stroke-linecap="round" /><path d="M613.9 260 C614 260.8 614.3 263.5 614.5 265 C614.7 266.5 615 268.4 615.1 269.1" fill="none" stroke="#1a1a1a" stroke-width="0.9" stroke-linejoin="round" stroke-linecap="round" /><path d="M594.5 208.3 C595.5 207.7 597.5 210.9 599.1 212.4 C600.7 213.9 602.4 216.1 604.2 217.4 C605.9 218.8 607.8 220.5 609.6 220.5 C611.5 220.5 613.5 218.6 615.3 217.4 C617.1 216.3 619.3 212.9 620.4 213.4 C621.5 213.9 621.5 217.6 622 220.5 C622.4 223.4 622.8 227.2 623 230.6 C623.2 234 623.2 237.9 623 240.7 C622.8 243.6 622.6 246 622 247.8 C621.4 249.7 620.7 251.3 619.6 251.9 C618.4 252.4 616.1 250.6 615.1 251.3 C614.1 251.9 614.5 254.6 613.7 255.7 C612.9 256.9 611.5 258.1 610.2 258.1 C609 258.2 607.5 256.1 606.2 256.1 C604.8 256.1 603.4 257.3 602.1 258.1 C600.9 259 600.2 261.4 598.9 261.4 C597.6 261.3 595.7 260 594.5 257.9 C593.2 255.8 592.2 252 591.6 248.8 C591 245.6 590.8 242.4 590.8 238.7 C590.8 235 591.1 230.3 591.4 226.6 C591.8 222.8 592.3 219.5 592.8 216.4 C593.3 213.4 593.4 209 594.5 208.3 Z" fill="#2e6496" stroke="#1a1a1a" stroke-width="1.2" stroke-linejoin="round" stroke-linecap="round" /><path d="M594.5 208.3 C595.4 209.4 598.2 212.2 600.1 214.4 C602.1 216.6 604.6 219.4 606.2 221.5 C607.8 223.6 609.1 226.1 609.6 227" fill="none" stroke="#1a1a1a" stroke-width="1" stroke-linejoin="round" stroke-linecap="round" /><path d="M620.4 213.4 C619.6 214.2 617.3 216.8 615.9 218.5 C614.5 220.1 612.9 222.1 611.9 223.5 C610.8 224.9 610.2 225.4 609.6 227 C609.1 228.5 608.8 232 608.6 233" fill="none" stroke="#1a1a1a" stroke-width="1" stroke-linejoin="round" stroke-linecap="round" /><path d="M597.7 225.5 C597.4 227.4 595.8 233 596.1 236.7 C596.3 240.4 597.8 244.8 599.1 247.8 C600.5 250.8 603.3 253.4 604.2 254.5" fill="none" stroke="#1a1a1a" stroke-width="0.9" stroke-linejoin="round" stroke-linecap="round" /><path d="M615.9 226.6 C616.1 228.2 617.7 233.1 617.3 236.7 C617 240.2 614.5 246 613.9 247.8" fill="none" stroke="#1a1a1a" stroke-width="0.9" stroke-linejoin="round" stroke-linecap="round" /><circle cx="602.6" cy="229.6" r="1.4" fill="#6fbf3f" stroke="#1a1a1a" stroke-width="0.5"/><path d="M613.9,248.4 L617.9,250.9 L616.7,253.3 L612.9,250.9 Z" fill="#fff" stroke="#1a1a1a" stroke-width="0.7"/><path d="M605 252.5 C604 253.2 603.9 254.9 604.2 255.9 C604.4 256.9 605.6 257.9 606.6 258.5 C607.6 259.1 609.2 259.8 610.2 259.6 C611.3 259.4 612.5 258.4 613.1 257.3 C613.6 256.3 614 254.3 613.5 253.3 C613 252.3 611.7 251.4 610.2 251.3 C608.8 251.1 606 251.7 605 252.5 Z" fill="#f6dac8" stroke="#1a1a1a" stroke-width="0.8"/><path d="M607.4,253.7 L608.8,258.1 M609.8,252.9 L611.1,257.7" fill="none" stroke="#1a1a1a" stroke-width="0.6" stroke-linejoin="round" stroke-linecap="round" /><path d="M602.500 208 L619.500 211 L612 224 L606 219 Z" fill="#f6dac8"/><path d="M598 196 C598.5 195.2 599.7 194.4 601 194.5 C602.3 194.6 605.4 195.5 606 196.5 C606.6 197.5 605.4 199.7 604.5 200.5 C603.6 201.3 601.6 201.7 600.5 201.5 C599.4 201.3 598.4 200.4 598 199.5 C597.6 198.6 597.5 196.8 598 196 Z" fill="#6a2e1c" stroke="#1a1a1a" stroke-width="0.7"/><path d="M601.5 196.5 C603.2 195.2 606.7 197.6 610 198 C613.3 198.4 619.4 197.9 621.5 198.8 C623.6 199.7 622.6 202 622.6 203.5 C622.6 205 622 206.5 621.4 208 C620.8 209.5 620.1 211.1 619 212.4 C617.9 213.7 616.4 215.1 615 215.8 C613.6 216.5 612.1 217 610.5 216.8 C608.9 216.6 606.9 215.7 605.5 214.6 C604.1 213.5 603.2 212 602.3 210.5 C601.4 209 600.1 207.8 600 205.5 C599.9 203.2 599.8 197.8 601.5 196.5 Z" fill="#f6dac8" stroke="#1a1a1a" stroke-width="1.2" stroke-linejoin="round" stroke-linecap="round" /><path d="M600.8 199.8 C600.3 198.8 598.8 198.2 598 198.3 C597.2 198.4 596 199.4 595.8 200.3 C595.6 201.2 596 203 596.6 204 C597.2 205 598.8 206.2 599.5 206.3 C600.2 206.4 600.8 205.6 601 204.5 C601.2 203.4 601.3 200.8 600.8 199.8 Z" fill="#f6dac8" stroke="#1a1a1a" stroke-width="1" stroke-linejoin="round" stroke-linecap="round" /><circle cx="612.400" cy="203.600" r="0.900" fill="#1a1a1a"/><path d="M619 203 Q620.300 202.300 621.300 203.200 M618.400 205.300 Q619.400 208.500 617.400 209.500 M613 209.300 Q615 211.300 617.700 210" fill="none" stroke="#1a1a1a" stroke-width="1" stroke-linejoin="round" stroke-linecap="round" /><path d="M590 186.300 L592.600 185.200 L590.800 188.200 L593.200 187.600 M589.200 192.500 L591.600 191.500 L590.300 194.600 L592.300 196.200" fill="none" stroke="#fff" stroke-width="1.200" stroke-linecap="round" stroke-linejoin="round"/><path d="M581.500 182.500 L583.300 181 M582.500 184.500 L584 183.300" fill="none" stroke="#1a1a1a" stroke-width="0.800" stroke-linejoin="round" stroke-linecap="round" /><path d="M599.6 193 C599.7 191.8 599.7 189.5 600.5 188 C601.3 186.5 602.8 185.1 604.5 184.2 C606.2 183.3 608.5 182.7 610.5 182.7 C612.5 182.7 614.8 183.2 616.5 184 C618.2 184.8 619.8 186.2 620.8 187.8 C621.8 189.4 622.4 192 622.8 193.5 C623.2 195 625 196.2 623 197 C621 197.8 614.8 198.2 611 198 C607.2 197.8 601.9 196.3 600 195.5 C598.1 194.7 599.5 194.2 599.6 193 Z" fill="#b97a2b" stroke="#1a1a1a" stroke-width="1.1" stroke-linejoin="round" stroke-linecap="round" /><path d="M593.8 192.8 C594.1 192.4 596 192.2 597.5 192.4 C599 192.6 600.8 193.7 603 194.2 C605.2 194.7 608.3 195.3 611 195.6 C613.7 195.9 616.8 196 619 196 C621.2 196 623.1 195.4 624.5 195.6 C625.9 195.8 627.2 196.6 627.2 197.3 C627.2 198 626.2 199.2 624.5 199.6 C622.8 200 619.7 200.1 617 200 C614.3 199.9 611.2 199.5 608.5 199 C605.8 198.5 602.7 197.7 600.5 197 C598.3 196.3 596.6 195.5 595.5 194.8 C594.4 194.1 593.5 193.2 593.8 192.8 Z" fill="#a96b22" stroke="#1a1a1a" stroke-width="1.1" stroke-linejoin="round" stroke-linecap="round" /><path d="M666.8 212.4 A8 6.3 0 1 1 670.8 212.5 L669.3 216 Z" fill="#fff" stroke="#1a1a1a" stroke-width="1" stroke-linejoin="round" stroke-linecap="round" /><path d="M670.2 209 C665.8 205.9 668.4 202.5 670.2 205.1 C672 202.5 674.6 205.9 670.2 209 Z" fill="#e0322d" stroke="#7a1414" stroke-width="0.5"/></g></g><rect x="325.3" y="335.5" width="207.100" height="144.200" rx="14" ry="14" fill="none" stroke="#404040" stroke-width="1.200"/><clipPath id="c4"><rect x="548.8" y="336.0" width="206.100" height="143.200" rx="13.500" ry="13.500"/></clipPath><g clip-path="url(#c4)"><g transform="translate(8 178.500)"><path d="M561 192 L556.800 205 L555 218.500 L572 217.500 L572 190 Z" fill="#6dbd50" filter="url(#fz)"/><path d="M726 252 L734 254 L739.500 266 L739 271 L720 271 Z" fill="#6dbd50" filter="url(#fz)"/><path d="M560.5 193.4 A3.5 3.5 0 0 1 563.3 188.5 A4.7 4.7 0 0 1 570.3 185.7 A4.5 4.5 0 0 1 577.3 183.6 A5.7 5.7 0 0 1 585 178.7 A5.6 5.6 0 0 1 594 178 A4.9 4.9 0 0 1 601.7 175.9 A4.8 4.8 0 0 1 609.3 177.3 A4.5 4.5 0 0 1 616.3 175.2 A4.1 4.1 0 0 1 622 178.7 A4.2 4.2 0 0 1 628.2 181.5 A4 4 0 0 1 634.4 183 A3.9 3.9 0 0 1 640 185.7 L640 185.7 A6.7 6.7 0 0 1 650 182.5 A9.4 9.4 0 0 1 664.7 183 A10.1 10.1 0 0 1 680 179.4 A10.8 10.8 0 0 1 696.8 179.4 A8.3 8.3 0 0 1 709.3 183 A4.6 4.6 0 0 1 711 190 A4.9 4.9 0 0 1 716.3 195.5 A8.9 8.9 0 0 1 729.6 199.6 A7.8 7.8 0 0 1 735 210.5 A7.4 7.4 0 0 1 736 222 A7.2 7.2 0 0 1 733.5 233 A6.4 6.4 0 0 1 730.5 242.5 A5.2 5.2 0 0 1 727.5 250 L717.700 254.300 L717.7 254.3 A6.3 6.3 0 0 1 728.2 254 A3.3 3.3 0 0 1 733.5 255.5 L737 262 L737 270.500 L655 270.500 L655 216.800 L559.500 217.500 L559.500 200 Z" fill="#6dbd50"/><path d="M716 197 Q726 202 730 213 Q732 224 728 240" fill="none" stroke="#8fd078" stroke-width="2.500" opacity="0.45" filter="url(#fz)"/><path d="M559 214 Q559 200 565 190" fill="none" stroke="#b5e0a3" stroke-width="3" opacity="0.7" filter="url(#fz)"/><path d="M733 257 L739.500 268" fill="none" stroke="#b5e0a3" stroke-width="3" opacity="0.6" filter="url(#fz)"/><path d="M560.5 193.4 A3.5 3.5 0 0 1 563.3 188.5 A4.7 4.7 0 0 1 570.3 185.7 A4.5 4.5 0 0 1 577.3 183.6 A5.7 5.7 0 0 1 585 178.7 A5.6 5.6 0 0 1 594 178 A4.9 4.9 0 0 1 601.7 175.9 A4.8 4.8 0 0 1 609.3 177.3 A4.5 4.5 0 0 1 616.3 175.2 A4.1 4.1 0 0 1 622 178.7 A4.2 4.2 0 0 1 628.2 181.5 A4 4 0 0 1 634.4 183 A3.9 3.9 0 0 1 640 185.7 A5.2 5.2 0 0 1 645.6 192 A4.1 4.1 0 0 1 651.2 195.5 A3.5 3.5 0 0 1 656.7 197" fill="none" stroke="#1a1a1a" stroke-width="1.25" stroke-linejoin="round" stroke-linecap="round" /><path d="M656.7 197 A2.9 2.9 0 0 1 659.5 200.5 A3.7 3.7 0 0 1 664 204" fill="none" stroke="#1a1a1a" stroke-width="1.25" stroke-linejoin="round" stroke-linecap="round" /><path d="M640 185.7 A6.7 6.7 0 0 1 650 182.5 A9.4 9.4 0 0 1 664.7 183 A10.1 10.1 0 0 1 680 179.4 A10.8 10.8 0 0 1 696.8 179.4 A8.3 8.3 0 0 1 709.3 183 A4.6 4.6 0 0 1 711 190 A4.9 4.9 0 0 1 716.3 195.5 A8.9 8.9 0 0 1 729.6 199.6 A7.8 7.8 0 0 1 735 210.5 A7.4 7.4 0 0 1 736 222 A7.2 7.2 0 0 1 733.5 233 A6.4 6.4 0 0 1 730.5 242.5 A5.2 5.2 0 0 1 727.5 250" fill="none" stroke="#1a1a1a" stroke-width="1.25" stroke-linejoin="round" stroke-linecap="round" /><path d="M717.7 254.3 A6.3 6.3 0 0 1 728.2 254 A3.3 3.3 0 0 1 733.5 255.5" fill="none" stroke="#1a1a1a" stroke-width="1.25" stroke-linejoin="round" stroke-linecap="round" /><path d="M635.5 208 A3.5 3.5 0 0 1 641 206.5 A3.6 3.6 0 0 1 646.5 208.5 A2.8 2.8 0 0 1 650.5 210.5" fill="none" stroke="#1a1a1a" stroke-width="1.1" stroke-linejoin="round" stroke-linecap="round" /><path d="M583.300 204.300 L582.200 208.600" fill="none" stroke="#1a1a1a" stroke-width="1.2" stroke-linejoin="round" stroke-linecap="round" /><path d="M666.8 214 A3.4 3.4 0 0 1 671 210.5 A4.5 4.5 0 0 1 676.6 215 A5.2 5.2 0 0 1 682.9 220.5 A4.3 4.3 0 0 1 687 226" fill="none" stroke="#1a1a1a" stroke-width="1.1" stroke-linejoin="round" stroke-linecap="round" /><path d="M689.8 228 A3.1 3.1 0 0 0 694 225.8 A4.2 4.2 0 0 0 700.3 226.5 A5.1 5.1 0 0 0 705.2 220.5" fill="none" stroke="#1a1a1a" stroke-width="1.1" stroke-linejoin="round" stroke-linecap="round" /><path d="M663.8 232.5 A2.5 2.5 0 0 1 662 236.2 A3.2 3.2 0 0 1 666 239.7 A4.7 4.7 0 0 1 673.8 241 A4.6 4.6 0 0 1 681.5 240.4 A4.1 4.1 0 0 1 688.4 240.4 A4.2 4.2 0 0 1 694 244.5 A4.1 4.1 0 0 1 700.3 247.3 A3.7 3.7 0 0 1 700.3 253.5 A3.4 3.4 0 0 1 695.4 256.5 A2.8 2.8 0 0 1 694 261 A3.1 3.1 0 0 1 689.8 264" fill="none" stroke="#1a1a1a" stroke-width="1.1" stroke-linejoin="round" stroke-linecap="round" /><path d="M562 266 Q600 265 655 263 L737 262.500 Q741 266 739 271.800 L600 272.300 L563 272.600 Q560.500 269 562 266 Z" fill="#62bb40" filter="url(#fz1)"/><path d="M566 273.5 C570.2 272.2 577.7 272.1 592 271.5 C606.3 270.9 633.8 270.4 652 270 C670.2 269.6 691.6 268.7 701 269.1 C710.4 269.5 707.2 271.3 708.5 272.5 C709.8 273.7 710.8 275.1 709 276.5 C707.2 277.9 699.5 279.7 698 281 C696.5 282.3 697.2 283.7 700 284.5 C702.8 285.3 712.2 285.1 715 285.9 C717.8 286.7 719.5 288.4 717 289.5 C714.5 290.6 708.2 292.1 700 292.8 C691.8 293.5 678 293.3 668 293.5 C658 293.7 652.7 293.9 640 294.2 C627.3 294.4 603.2 295 592 295 C580.8 295 577 294.9 573 294 C569 293.1 568.3 291.1 568 289.5 C567.7 287.9 571.2 286.2 571 284.5 C570.8 282.8 567.3 281.3 566.5 279.5 C565.7 277.7 561.8 274.8 566 273.5 Z" fill="#606060"/><path d="M661 271.500 L729.600 269.600" fill="none" stroke="#1a1a1a" stroke-width="1" stroke-linejoin="round" stroke-linecap="round" /><path d="M666.800 244.500 L668.800 270.600 L670.600 270.600 Z M673.300 262 L673.100 270.500 L674.600 270.500 Z" fill="#7a4a1d" stroke="#3a2510" stroke-width="0.500"/><path d="M699.900 203.800 L689.800 216 L690.300 226.300 L688 226.500 L686.600 211 L688.400 214 Z" fill="#8a4f1f" stroke="#3a2510" stroke-width="0.500"/><path d="M662 227 C662 225.7 662.5 223.5 663.3 222.5 C664.1 221.5 665.7 221 667 220.8 C668.3 220.6 669.8 220.8 671 221.3 C672.2 221.8 674.1 222.8 674.5 224 C674.9 225.2 674.2 227.2 673.5 228.3 C672.8 229.4 671.2 230.2 670 230.8 C668.8 231.5 667.6 232.3 666.5 232.2 C665.4 232.1 664 231.2 663.2 230.3 C662.5 229.4 662 228.3 662 227 Z" fill="#d3264a" stroke="#7d0f28" stroke-width="0.700"/><path d="M664.500 224.500 Q667.500 222 671.500 224 Q672.500 226.500 670 228.500 M664.300 227.800 Q667.500 230 671 228 M666.800 225.300 Q668.500 227.300 670.300 225.300 M663.500 229.500 Q666.500 231.500 669.500 230.500" fill="none" stroke="#8d1230" stroke-width="0.700"/><path d="M666 226 Q668 228.500 670.500 226.500 Q669 224 666 226 Z" fill="#a8183a"/><path d="M566.800 217.900 L568.900 217.800 Q610 215.300 654.500 214.500 Q655.300 236 655 254 L568.600 254 Z" fill="#fff" stroke="#1a1a1a" stroke-width="1.25" stroke-linejoin="round" stroke-linecap="round" /><path d="M565 254.800 Q610 253.600 655 253.500 L660.500 260.200 L660.200 262.900 Q610 263.300 566.500 265 Z" fill="#fff"/><path d="M565 254.800 Q610 253.600 655 253.500 L660.500 260.200 L660.200 262.900 M566 261.400 Q610 259.800 659.800 259.300 M567 264.800 Q610 263.300 660.200 262.800" fill="none" stroke="#1a1a1a" stroke-width="1.15" stroke-linejoin="round" stroke-linecap="round" /><path d="M647.500 263 L647.300 274.500 Q647.600 276.500 649.800 276.300 L650 268.500 Q650.200 266.300 652.300 266.300 Q654.800 266.500 655.200 269 L655.400 289 Q658.500 290.300 662 289.300 L662.200 263 Z" fill="#fff" stroke="#1a1a1a" stroke-width="1.1" stroke-linejoin="round" stroke-linecap="round" /><path d="M651.200 264.600 Q652.800 267.300 654.400 264.600" fill="#6dbd50" stroke="#1a1a1a" stroke-width="0.800" stroke-linejoin="round" stroke-linecap="round" /><path d="M599.7 284.9 C598.6 285.1 598.3 287.1 598.5 288.3 C598.7 289.5 600 291.2 601.1 292.3 C602.2 293.5 604.3 295.4 605.2 295.4 C606.1 295.4 606.6 293.8 606.6 292.3 C606.6 290.9 606.5 288.1 605.4 286.9 C604.2 285.6 600.9 284.6 599.7 284.9 Z" fill="#264f7c" stroke="#1a1a1a" stroke-width="0.9"/><path d="M624 286.3 C623.2 287.1 624.1 289.1 624.6 290.3 C625.2 291.6 626.4 293.5 627.2 293.8 C628.1 294 629.3 293.1 629.7 291.7 C630 290.4 630.2 286.6 629.3 285.7 C628.3 284.8 624.8 285.5 624 286.3 Z" fill="#264f7c" stroke="#1a1a1a" stroke-width="0.9"/><path d="M597.7 260.6 C598.4 259 602.1 256.9 604.2 256.5 C606.3 256.1 608.4 258.4 610.2 258.1 C612.1 257.9 613.5 256 615.3 254.9 C617.1 253.8 619.1 251 620.8 251.5 C622.5 252 624.3 255.3 625.4 257.9 C626.5 260.5 626.9 263.8 627.4 267 C628 270.2 628.2 274.1 628.5 277.2 C628.8 280.2 630.1 283.8 629.3 285.5 C628.5 287.1 625 287.8 623.6 286.9 C622.2 286 621.8 282.2 620.8 280.2 C619.8 278.2 618.5 276.6 617.5 274.7 C616.6 272.9 615.8 269 615.1 269.1 C614.4 269.1 613.9 273.2 613.1 275.1 C612.3 277.1 611.4 278.8 610.2 280.8 C609.1 282.9 607.8 286.9 606 287.5 C604.2 288.1 600.1 286.1 599.3 284.5 C598.5 282.8 600.7 279.7 601.3 277.6 C602 275.4 603.6 273.4 603.4 271.5 C603.1 269.6 600.7 267.9 599.7 266 C598.8 264.2 597 262.2 597.7 260.6 Z" fill="#8fbdcc" stroke="#1a1a1a" stroke-width="1.2" stroke-linejoin="round" stroke-linecap="round" /><path d="M613.9 260 C614 260.8 614.3 263.5 614.5 265 C614.7 266.5 615 268.4 615.1 269.1" fill="none" stroke="#1a1a1a" stroke-width="0.9" stroke-linejoin="round" stroke-linecap="round" /><path d="M594.5 208.3 C595.5 207.7 597.5 210.9 599.1 212.4 C600.7 213.9 602.4 216.1 604.2 217.4 C605.9 218.8 607.8 220.5 609.6 220.5 C611.5 220.5 613.5 218.6 615.3 217.4 C617.1 216.3 619.3 212.9 620.4 213.4 C621.5 213.9 621.5 217.6 622 220.5 C622.4 223.4 622.8 227.2 623 230.6 C623.2 234 623.2 237.9 623 240.7 C622.8 243.6 622.6 246 622 247.8 C621.4 249.7 620.7 251.3 619.6 251.9 C618.4 252.4 616.1 250.6 615.1 251.3 C614.1 251.9 614.5 254.6 613.7 255.7 C612.9 256.9 611.5 258.1 610.2 258.1 C609 258.2 607.5 256.1 606.2 256.1 C604.8 256.1 603.4 257.3 602.1 258.1 C600.9 259 600.2 261.4 598.9 261.4 C597.6 261.3 595.7 260 594.5 257.9 C593.2 255.8 592.2 252 591.6 248.8 C591 245.6 590.8 242.4 590.8 238.7 C590.8 235 591.1 230.3 591.4 226.6 C591.8 222.8 592.3 219.5 592.8 216.4 C593.3 213.4 593.4 209 594.5 208.3 Z" fill="#2e6496" stroke="#1a1a1a" stroke-width="1.2" stroke-linejoin="round" stroke-linecap="round" /><path d="M594.5 208.3 C595.4 209.4 598.2 212.2 600.1 214.4 C602.1 216.6 604.6 219.4 606.2 221.5 C607.8 223.6 609.1 226.1 609.6 227" fill="none" stroke="#1a1a1a" stroke-width="1" stroke-linejoin="round" stroke-linecap="round" /><path d="M620.4 213.4 C619.6 214.2 617.3 216.8 615.9 218.5 C614.5 220.1 612.9 222.1 611.9 223.5 C610.8 224.9 610.2 225.4 609.6 227 C609.1 228.5 608.8 232 608.6 233" fill="none" stroke="#1a1a1a" stroke-width="1" stroke-linejoin="round" stroke-linecap="round" /><path d="M597.7 225.5 C597.4 227.4 595.8 233 596.1 236.7 C596.3 240.4 597.8 244.8 599.1 247.8 C600.5 250.8 603.3 253.4 604.2 254.5" fill="none" stroke="#1a1a1a" stroke-width="0.9" stroke-linejoin="round" stroke-linecap="round" /><path d="M615.9 226.6 C616.1 228.2 617.7 233.1 617.3 236.7 C617 240.2 614.5 246 613.9 247.8" fill="none" stroke="#1a1a1a" stroke-width="0.9" stroke-linejoin="round" stroke-linecap="round" /><circle cx="602.6" cy="229.6" r="1.4" fill="#6fbf3f" stroke="#1a1a1a" stroke-width="0.5"/><path d="M613.9,248.4 L617.9,250.9 L616.7,253.3 L612.9,250.9 Z" fill="#fff" stroke="#1a1a1a" stroke-width="0.7"/><path d="M605 252.5 C604 253.2 603.9 254.9 604.2 255.9 C604.4 256.9 605.6 257.9 606.6 258.5 C607.6 259.1 609.2 259.8 610.2 259.6 C611.3 259.4 612.5 258.4 613.1 257.3 C613.6 256.3 614 254.3 613.5 253.3 C613 252.3 611.7 251.4 610.2 251.3 C608.8 251.1 606 251.7 605 252.5 Z" fill="#f6dac8" stroke="#1a1a1a" stroke-width="0.8"/><path d="M607.4,253.7 L608.8,258.1 M609.8,252.9 L611.1,257.7" fill="none" stroke="#1a1a1a" stroke-width="0.6" stroke-linejoin="round" stroke-linecap="round" /><path d="M602.500 208 L619.500 211 L612 224 L606 219 Z" fill="#f6dac8"/><path d="M598 196 C598.5 195.2 599.7 194.4 601 194.5 C602.3 194.6 605.4 195.5 606 196.5 C606.6 197.5 605.4 199.7 604.5 200.5 C603.6 201.3 601.6 201.7 600.5 201.5 C599.4 201.3 598.4 200.4 598 199.5 C597.6 198.6 597.5 196.8 598 196 Z" fill="#6a2e1c" stroke="#1a1a1a" stroke-width="0.7"/><path d="M601.5 196.5 C603.2 195.2 606.7 197.6 610 198 C613.3 198.4 619.4 197.9 621.5 198.8 C623.6 199.7 622.6 202 622.6 203.5 C622.6 205 622 206.5 621.4 208 C620.8 209.5 620.1 211.1 619 212.4 C617.9 213.7 616.4 215.1 615 215.8 C613.6 216.5 612.1 217 610.5 216.8 C608.9 216.6 606.9 215.7 605.5 214.6 C604.1 213.5 603.2 212 602.3 210.5 C601.4 209 600.1 207.8 600 205.5 C599.9 203.2 599.8 197.8 601.5 196.5 Z" fill="#f6dac8" stroke="#1a1a1a" stroke-width="1.2" stroke-linejoin="round" stroke-linecap="round" /><path d="M600.8 199.8 C600.3 198.8 598.8 198.2 598 198.3 C597.2 198.4 596 199.4 595.8 200.3 C595.6 201.2 596 203 596.6 204 C597.2 205 598.8 206.2 599.5 206.3 C600.2 206.4 600.8 205.6 601 204.5 C601.2 203.4 601.3 200.8 600.8 199.8 Z" fill="#f6dac8" stroke="#1a1a1a" stroke-width="1" stroke-linejoin="round" stroke-linecap="round" /><ellipse cx="609.300" cy="205.600" rx="3" ry="1.600" fill="#f3a6ae" opacity="0.850"/><ellipse cx="619.800" cy="206.300" rx="1.800" ry="1.300" fill="#f3a6ae" opacity="0.850"/><path d="M607.500 203.200 Q610.300 200.800 612.800 203 M618.800 203.300 Q620.300 202 621.600 203.300 M617.600 204 Q618.600 207.600 616.500 208.300 M609.500 209.800 Q612.500 212.600 616.300 211.200" fill="none" stroke="#1a1a1a" stroke-width="1" stroke-linejoin="round" stroke-linecap="round" /><path d="M599.6 193 C599.7 191.8 599.7 189.5 600.5 188 C601.3 186.5 602.8 185.1 604.5 184.2 C606.2 183.3 608.5 182.7 610.5 182.7 C612.5 182.7 614.8 183.2 616.5 184 C618.2 184.8 619.8 186.2 620.8 187.8 C621.8 189.4 622.4 192 622.8 193.5 C623.2 195 625 196.2 623 197 C621 197.8 614.8 198.2 611 198 C607.2 197.8 601.9 196.3 600 195.5 C598.1 194.7 599.5 194.2 599.6 193 Z" fill="#b97a2b" stroke="#1a1a1a" stroke-width="1.1" stroke-linejoin="round" stroke-linecap="round" /><path d="M593.8 192.8 C594.1 192.4 596 192.2 597.5 192.4 C599 192.6 600.8 193.7 603 194.2 C605.2 194.7 608.3 195.3 611 195.6 C613.7 195.9 616.8 196 619 196 C621.2 196 623.1 195.4 624.5 195.6 C625.9 195.8 627.2 196.6 627.2 197.3 C627.2 198 626.2 199.2 624.5 199.6 C622.8 200 619.7 200.1 617 200 C614.3 199.9 611.2 199.5 608.5 199 C605.8 198.5 602.7 197.7 600.5 197 C598.3 196.3 596.6 195.5 595.5 194.8 C594.4 194.1 593.5 193.2 593.8 192.8 Z" fill="#a96b22" stroke="#1a1a1a" stroke-width="1.1" stroke-linejoin="round" stroke-linecap="round" /><path d="M665 212.3 A8 6.3 0 1 1 669 212.4 L667.5 215.9 Z" fill="#fff" stroke="#1a1a1a" stroke-width="1" stroke-linejoin="round" stroke-linecap="round" /><path d="M668.4 208.9 C664 205.8 666.6 202.4 668.4 205 C670.2 202.4 672.8 205.8 668.4 208.9 Z" fill="#e0322d" stroke="#7a1414" stroke-width="0.5"/><path d="M540 160 H561.500 L562.500 215 L565 262 L565.500 300 H540 Z" fill="#fff" filter="url(#fz1)"/><path d="M586.2 187.1 A9.8 8.3 0 1 1 590.2 187.2 L588.7 190.7 Z" fill="#fff" stroke="#1a1a1a" stroke-width="1" stroke-linejoin="round" stroke-linecap="round" /><circle cx="580.9" cy="180.2" r="1.200" fill="#f0443a"/><circle cx="590.2" cy="180.2" r="1.200" fill="#f0443a"/><circle cx="583.7" cy="177.9" r="0.700" fill="#1a1a1a"/><circle cx="587.4" cy="177.9" r="0.700" fill="#1a1a1a"/><path d="M582.9 181.2 Q585.6 184.4 588.4 181.2" fill="none" stroke="#1a1a1a" stroke-width="0.900" stroke-linejoin="round" stroke-linecap="round" /></g></g><rect x="548.3" y="335.5" width="207.100" height="144.200" rx="14" ry="14" fill="none" stroke="#404040" stroke-width="1.200"/></svg><!--/COMIC-->
<!-- status -->
<div class="a" style="left:3px;top:566px;width:786px;height:27px;background:#f0f0f0"></div>


<!-- doc h scrollbar -->
<div class="a" style="left:226px;top:552px;width:546px;height:14px;background:#f0f0f0"></div>
<div class="a" style="left:218px;top:551px;width:8px;height:14px;background:#e4e4e4;border:1px solid #777"></div>
<svg style="left:231px;top:554px" width="6" height="9" viewBox="0 0 6 9"><path d="M5 0.500 V8.500 L0.800 4.500 Z" fill="#444"/></svg>
<div class="a" style="left:244px;top:552px;width:450px;height:13px;border:1px solid #a5a5a5;border-radius:2px;background:linear-gradient(#f6f6f6,#e9e9e9 45%,#d4d4d4 50%,#dfdfdf)"></div>
<div class="a" style="left:464px;top:556px;width:1px;height:6px;background:#555;box-shadow:2px 0 0 #555,4px 0 0 #555,6px 0 0 #555"></div>
<svg style="left:761px;top:554px" width="6" height="9" viewBox="0 0 6 9"><path d="M1 0.500 V8.500 L5.200 4.500 Z" fill="#444"/></svg>
<!-- v scrollbar -->
<div class="a" style="left:772px;top:125px;width:17px;height:442px;background:#f0f0f0"></div>
<div class="a" style="left:772px;top:125px;width:17px;height:9px;background:#e2e2e2;border:1px solid #777;border-top:0"></div>
<svg style="left:776px;top:140px" width="10" height="6" viewBox="0 0 10 6"><path d="M0.500 5.500 H9 L4.800 1 Z" fill="#444"/></svg>
<div class="a" style="left:773px;top:167px;width:15px;height:15px;border:1px solid #a5a5a5;border-radius:2px;background:linear-gradient(90deg,#f6f6f6,#e9e9e9 45%,#d4d4d4 50%,#dfdfdf)"></div>
<svg style="left:776px;top:557px" width="10" height="6" viewBox="0 0 10 6"><path d="M0.500 0.500 H9 L4.800 5 Z" fill="#444"/></svg>

<!-- status bar content -->
<svg style="left:168px;top:573px" width="15" height="15" viewBox="0 0 15 15"><path d="M8 1 V13.500 L1 7.250 Z" fill="#111"/><rect x="10.300" y="1.500" width="2.400" height="11.500" rx="1" fill="#111"/></svg>
<svg style="left:195px;top:573px" width="10" height="15" viewBox="0 0 10 15"><path d="M8.500 1 V13.500 L0.800 7.250 Z" fill="#111"/></svg>
<div class="a" style="left:215px;top:570px;width:115px;height:20px;background:#fff;border:1px solid #ababab"></div>
<div class="t" style="left:219px;top:574px;font-size:13px">8 / 180</div>
<div class="a" style="left:319px;top:579px;border:3px solid transparent;border-top:3.500px solid #111;border-bottom:0"></div>
<svg style="left:338px;top:573px" width="10" height="15" viewBox="0 0 10 15"><path d="M1 1 V13.500 L8.700 7.250 Z" fill="#111"/></svg>
<svg style="left:360px;top:573px" width="15" height="15" viewBox="0 0 15 15"><path d="M7 1 V13.500 L14 7.250 Z" fill="#111"/><rect x="2.300" y="1.500" width="2.400" height="11.500" rx="1" fill="#111"/></svg>
<svg style="left:385px;top:571px" width="19" height="19" viewBox="0 0 19 19">
<path d="M8.500 10.500 H1.500 V1.500 H11.500 V4" fill="none" stroke="#777" stroke-width="1"/><rect x="1" y="1" width="11" height="2.400" fill="#3b73b3"/>
<rect x="6.500" y="9.500" width="10.500" height="8" fill="#fff" stroke="#555" stroke-width="1.200"/>
<path d="M17.500 5.500 H11" stroke="#4fa07f" stroke-width="1.600"/><path d="M9 5.500 L12.500 2.300 V8.700 Z" fill="#4fa07f"/>
</svg>
<svg style="left:411px;top:571px" width="19" height="19" viewBox="0 0 19 19" opacity="0.450">
<path d="M8.500 10.500 H1.500 V1.500 H11.500 V6" fill="none" stroke="#777" stroke-width="1"/><rect x="1" y="1" width="11" height="2.400" fill="#3b73b3"/>
<rect x="6.500" y="7.500" width="10.500" height="9" fill="#fff" stroke="#777" stroke-width="1.100"/><rect x="6" y="7" width="11.500" height="2.400" fill="#3b73b3"/>
<path d="M2 13.500 H7" stroke="#4fa07f" stroke-width="1.600"/><path d="M9.500 13.500 L6 10.300 V16.700 Z" fill="#4fa07f"/>
</svg>
<svg style="left:450px;top:574px" width="13" height="15" viewBox="0 0 13 15"><rect x="1" y="0.700" width="10.600" height="13" fill="#fff" stroke="#777" stroke-width="1"/><path d="M3.300 4 H9.300 M3.300 6.500 H9.300 M3.300 9 H9.300 M3.300 11.500 H9.300" stroke="#999" stroke-width="0.800"/></svg>
<div class="a" style="left:471px;top:572px;width:24px;height:17px;background:#d5b9e3"></div>
<svg style="left:476px;top:572px" width="14" height="17" viewBox="0 0 14 17"><path d="M1.500 0 V9 H12.500 V0 M1.500 17 V12 H12.500 V17" fill="#fff" stroke="#777" stroke-width="1"/><path d="M3.500 3 H10.500 M3.500 5.500 H10.500 M3.500 14.500 H10.500" stroke="#999" stroke-width="0.800"/></svg>
<svg style="left:500px;top:574px" width="17" height="15" viewBox="0 0 17 15"><rect x="0.700" y="0.700" width="6.600" height="13" fill="#fff" stroke="#777" stroke-width="1"/><rect x="9" y="0.700" width="6.600" height="13" fill="#fff" stroke="#777" stroke-width="1"/><path d="M2.500 4 H5.500 M2.500 6.500 H5.500 M2.500 9 H5.500 M10.800 4 H13.800 M10.800 6.500 H13.800 M10.800 9 H13.800" stroke="#999" stroke-width="0.800"/></svg>
<svg style="left:526px;top:572px" width="17" height="17" viewBox="0 0 17 17"><path d="M1 0.500 H7 V9.500 H1 M16 0.500 H9.500 V9.500 H16 M1 12.500 H7 V17 M16 12.500 H9.500 V17" fill="none" stroke="#777" stroke-width="1"/><path d="M1 3.500 H5 M1 6 H5 M11.500 3.500 H16 M11.500 6 H16 M1 15 H5 M11.500 15 H16" stroke="#999" stroke-width="0.800"/></svg>
<div class="t" style="left:573px;top:574px;font-size:13px;color:#444">75%</div>
<div class="a" style="left:625px;top:577px;border:3px solid transparent;border-top:3.500px solid #111;border-bottom:0"></div>
<svg style="left:635px;top:571px" width="136" height="18" viewBox="0 0 136 18">
<circle cx="8.600" cy="8.800" r="6.600" fill="#fff" stroke="#444" stroke-width="1"/><path d="M5 8.800 H12.200" stroke="#444" stroke-width="1.200"/>
<path d="M23 9.500 H114" stroke="#444" stroke-width="1"/>
<rect x="54" y="5" width="4" height="9" fill="#222"/><path d="M68.500 6 V13" stroke="#444" stroke-width="1"/>
<circle cx="126.200" cy="8.800" r="6.600" fill="#fff" stroke="#444" stroke-width="1"/><path d="M122.600 8.800 H129.800 M126.200 5.200 V12.400" stroke="#444" stroke-width="1.200"/>
</svg>
<svg style="left:774px;top:573px" width="14" height="14" viewBox="0 0 14 14"><path d="M1 13 L13 1 M5 13 L13 5 M9 13 L13 9" stroke="#777" stroke-width="1"/></svg>

</body></html>
